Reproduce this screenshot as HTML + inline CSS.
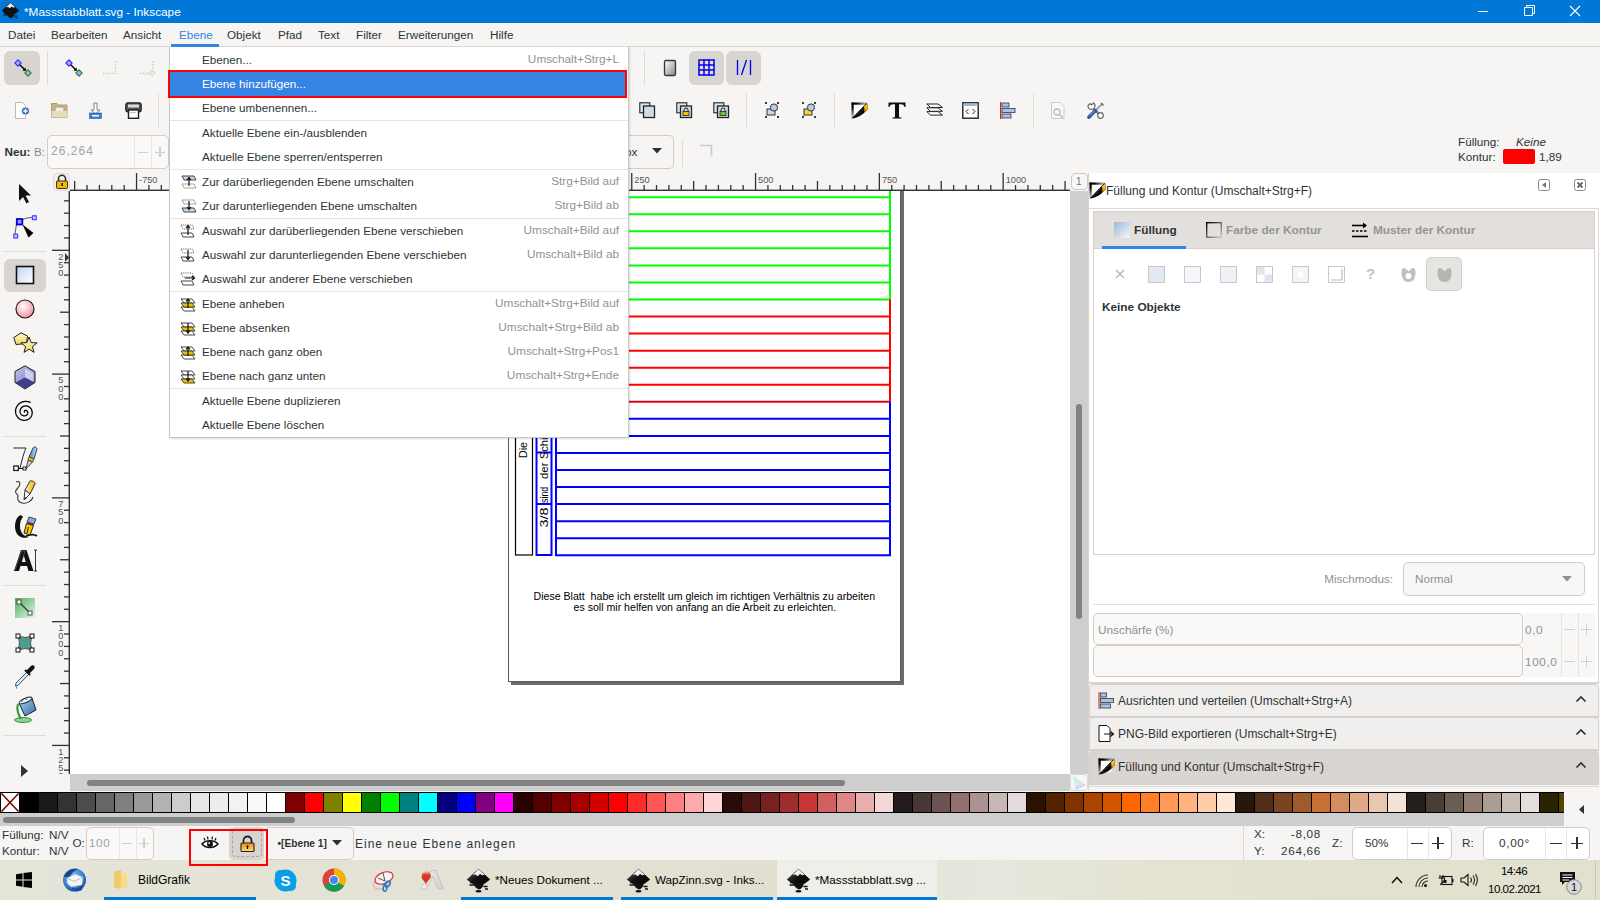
<!DOCTYPE html><html><head><meta charset="utf-8"><style>*{margin:0;padding:0;box-sizing:border-box}
html,body{width:1600px;height:900px;overflow:hidden;background:#f6f5f4;font-family:"Liberation Sans",sans-serif;font-size:12px;color:#2e3436}
.a{position:absolute}
.t{position:absolute;white-space:nowrap;line-height:1}
svg{position:absolute;overflow:visible}
</style></head><body>
<div class="a" style="left:0px;top:0px;width:1600px;height:23px;background:#0078d7"></div>
<div class="t" style="left:24px;top:7px;color:#fff;font-size:11.8px">*Massstabblatt.svg - Inkscape</div>
<svg class="a" style="left:1px;top:2px" width="19" height="19" viewBox="0 0 25 25"><path d='M12.5 0.8 L24.2 11.5 L19 15.5 L12.5 17.5 L6 15.5 L0.8 11.5 Z' fill='#111'/><path d='M12.5 1.2 L18.5 6.8 L16 7.2 L14 5.8 L11.8 8.2 L9.5 6.5 L6.8 7 Z' fill='#f4f4f4'/><path d='M7 15 C8 18 10 20.5 13 21.5 C15.5 21 17 19 18 15.5 Z' fill='#111'/><path d='M4 14.5 H9 M3.5 17 H8' stroke='#111' stroke-width='1.6'/><path d='M17.5 18.5 H21.5 M19 21 H22' stroke='#111' stroke-width='1.4'/></svg>
<svg class="a" style="left:1470px;top:0" width="130" height="23"><path d="M8 11.5 H18" stroke="#fff" stroke-width="1"/><path d="M54.5 7.5 H62.5 V15.5 H54.5 Z M56.5 7.5 V5.5 H64.5 V13.5 H62.5" fill="none" stroke="#fff" stroke-width="1"/><path d="M100 6 L110 16 M110 6 L100 16" stroke="#fff" stroke-width="1.1"/></svg>
<div class="a" style="left:0px;top:46px;width:1600px;height:1px;background:#dcd8d4"></div>
<div class="t" style="left:8px;top:29px;color:#2e3436;font-size:11.7px">Datei</div>
<div class="t" style="left:51px;top:29px;color:#2e3436;font-size:11.7px">Bearbeiten</div>
<div class="t" style="left:123px;top:29px;color:#2e3436;font-size:11.7px">Ansicht</div>
<div class="t" style="left:179px;top:29px;color:#3584e4;font-size:11.7px">Ebene</div>
<div class="t" style="left:227px;top:29px;color:#2e3436;font-size:11.7px">Objekt</div>
<div class="t" style="left:278px;top:29px;color:#2e3436;font-size:11.7px">Pfad</div>
<div class="t" style="left:318px;top:29px;color:#2e3436;font-size:11.7px">Text</div>
<div class="t" style="left:356px;top:29px;color:#2e3436;font-size:11.7px">Filter</div>
<div class="t" style="left:398px;top:29px;color:#2e3436;font-size:11.7px">Erweiterungen</div>
<div class="t" style="left:490px;top:29px;color:#2e3436;font-size:11.7px">Hilfe</div>
<div class="a" style="left:171px;top:44px;width:48px;height:3px;background:#3584e4"></div>
<div class="a" style="left:70px;top:191px;width:1000px;height:583px;background:#fff"></div>
<div class="a" style="left:508px;top:191px;width:393px;height:491px;border:1px solid #5a5a5a;border-top:none"></div>
<div class="a" style="left:901px;top:191px;width:3px;height:494px;background:#6b6b6b"></div>
<div class="a" style="left:511px;top:682px;width:393px;height:3px;background:#6b6b6b"></div>
<svg class="a" style="left:0;top:0" width="1600" height="900"><defs><clipPath id="cv"><rect x="70" y="191" width="1000" height="583"/></clipPath></defs><g clip-path="url(#cv)"><line x1="555" y1="197.2" x2="891" y2="197.2" stroke="#00ff00" stroke-width="2"/><line x1="555" y1="214.25" x2="891" y2="214.25" stroke="#00ff00" stroke-width="2"/><line x1="555" y1="231.3" x2="891" y2="231.3" stroke="#00ff00" stroke-width="2"/><line x1="555" y1="248.35" x2="891" y2="248.35" stroke="#00ff00" stroke-width="2"/><line x1="555" y1="265.4" x2="891" y2="265.4" stroke="#00ff00" stroke-width="2"/><line x1="555" y1="282.45" x2="891" y2="282.45" stroke="#00ff00" stroke-width="2"/><line x1="555" y1="299.5" x2="891" y2="299.5" stroke="#00ff00" stroke-width="2"/><line x1="555" y1="316.55" x2="891" y2="316.55" stroke="#ff0000" stroke-width="2"/><line x1="555" y1="333.6" x2="891" y2="333.6" stroke="#ff0000" stroke-width="2"/><line x1="555" y1="350.65" x2="891" y2="350.65" stroke="#ff0000" stroke-width="2"/><line x1="555" y1="367.7" x2="891" y2="367.7" stroke="#ff0000" stroke-width="2"/><line x1="555" y1="384.75" x2="891" y2="384.75" stroke="#ff0000" stroke-width="2"/><line x1="555" y1="401.8" x2="891" y2="401.8" stroke="#e0001b" stroke-width="2"/><line x1="555" y1="418.85" x2="891" y2="418.85" stroke="#0000ff" stroke-width="2"/><line x1="555" y1="435.9" x2="891" y2="435.9" stroke="#0000ff" stroke-width="2"/><line x1="555" y1="452.95" x2="891" y2="452.95" stroke="#0000ff" stroke-width="2"/><line x1="555" y1="470.0" x2="891" y2="470.0" stroke="#0000ff" stroke-width="2"/><line x1="555" y1="487.05" x2="891" y2="487.05" stroke="#0000ff" stroke-width="2"/><line x1="555" y1="504.1" x2="891" y2="504.1" stroke="#0000ff" stroke-width="2"/><line x1="555" y1="521.15" x2="891" y2="521.15" stroke="#0000ff" stroke-width="2"/><line x1="555" y1="538.2" x2="891" y2="538.2" stroke="#0000ff" stroke-width="2"/><line x1="555" y1="555.25" x2="891" y2="555.25" stroke="#0000ff" stroke-width="2"/><line x1="890" y1="191" x2="890" y2="299.3" stroke="#00ff00" stroke-width="2"/><line x1="890" y1="299.3" x2="890" y2="401.7" stroke="#ff0000" stroke-width="2"/><line x1="890" y1="401.7" x2="890" y2="556" stroke="#0000ff" stroke-width="2"/><line x1="556" y1="191" x2="556" y2="556" stroke="#0000ff" stroke-width="2"/><rect x="536.5" y="150" width="15" height="405" fill="none" stroke="#0000ff" stroke-width="2"/><line x1="536" y1="452.5" x2="552" y2="452.5" stroke="#0000ff" stroke-width="2"/><line x1="536" y1="504" x2="552" y2="504" stroke="#0000ff" stroke-width="2"/><rect x="515.5" y="150" width="17" height="405" fill="none" stroke="#000" stroke-width="1.2"/><text transform="translate(527.2,458) rotate(-90)" font-family="Liberation Sans" font-size="11.5" fill="#000" textLength="16" lengthAdjust="spacingAndGlyphs">Die</text><text transform="translate(527.2,437) rotate(-90)" font-family="Liberation Sans" font-size="11.5" fill="#000">Schienen</text><text transform="translate(548.2,527.5) rotate(-90)" font-family="Liberation Sans" font-size="11" fill="#000" textLength="20" lengthAdjust="spacingAndGlyphs">3/8</text><text transform="translate(548.2,503) rotate(-90)" font-family="Liberation Sans" font-size="11" fill="#000" textLength="16.3" lengthAdjust="spacingAndGlyphs">sind</text><text transform="translate(548.2,479) rotate(-90)" font-family="Liberation Sans" font-size="11" fill="#000" textLength="16.5" lengthAdjust="spacingAndGlyphs">der</text><text transform="translate(548.2,459) rotate(-90)" font-family="Liberation Sans" font-size="11" fill="#000">Schienen</text></g></svg>
<div class="t" style="left:533.5px;top:591px;font-size:10.6px;color:#000">Diese Blatt&nbsp; habe ich erstellt um gleich im richtigen Verhältnis zu arbeiten</div>
<div class="t" style="left:573.5px;top:602.2px;font-size:10.6px;color:#000">es soll mir helfen von anfang an die Arbeit zu erleichten.</div>
<div class="a" style="left:1070px;top:191px;width:18px;height:583px;background:#cecece"></div>
<div class="a" style="left:1076px;top:404px;width:6px;height:215px;border-radius:3px;background:#7e8283"></div>
<div class="a" style="left:70px;top:774px;width:1000px;height:17px;background:#cecece"></div>
<div class="a" style="left:87px;top:780px;width:758px;height:6px;border-radius:3px;background:#7e8283"></div>
<div class="a" style="left:1070px;top:774px;width:18px;height:17px;background:#f8f7f6;border:1px solid #ddd6d0;border-radius:4px"></div>
<div class="a" style="left:0px;top:792px;width:1564px;height:21px;background:#000"></div>
<svg class="a" style="left:0;top:0" width="1600" height="900"><rect x="1" y="793" width="18" height="19" fill="#fff"/><path d="M1.5 793.5 L18.5 811.5 M18.5 793.5 L1.5 811.5" stroke="#800000" stroke-width="1.6"/><rect x="20" y="793" width="18" height="19" fill="#000000"/><rect x="39" y="793" width="18" height="19" fill="#1a1a1a"/><rect x="58" y="793" width="18" height="19" fill="#333333"/><rect x="77" y="793" width="18" height="19" fill="#4d4d4d"/><rect x="96" y="793" width="18" height="19" fill="#666666"/><rect x="115" y="793" width="18" height="19" fill="#808080"/><rect x="134" y="793" width="18" height="19" fill="#999999"/><rect x="153" y="793" width="18" height="19" fill="#b3b3b3"/><rect x="172" y="793" width="18" height="19" fill="#cccccc"/><rect x="191" y="793" width="18" height="19" fill="#e6e6e6"/><rect x="210" y="793" width="18" height="19" fill="#ececec"/><rect x="229" y="793" width="18" height="19" fill="#f2f2f2"/><rect x="248" y="793" width="18" height="19" fill="#f9f9f9"/><rect x="267" y="793" width="18" height="19" fill="#ffffff"/><rect x="286" y="793" width="18" height="19" fill="#800000"/><rect x="305" y="793" width="18" height="19" fill="#ff0000"/><rect x="324" y="793" width="18" height="19" fill="#808000"/><rect x="343" y="793" width="18" height="19" fill="#ffff00"/><rect x="362" y="793" width="18" height="19" fill="#008000"/><rect x="381" y="793" width="18" height="19" fill="#00ff00"/><rect x="400" y="793" width="18" height="19" fill="#008080"/><rect x="419" y="793" width="18" height="19" fill="#00ffff"/><rect x="438" y="793" width="18" height="19" fill="#000080"/><rect x="457" y="793" width="18" height="19" fill="#0000ff"/><rect x="476" y="793" width="18" height="19" fill="#800080"/><rect x="495" y="793" width="18" height="19" fill="#ff00ff"/><rect x="514" y="793" width="18" height="19" fill="#2b0000"/><rect x="533" y="793" width="18" height="19" fill="#550000"/><rect x="552" y="793" width="18" height="19" fill="#800000"/><rect x="571" y="793" width="18" height="19" fill="#aa0000"/><rect x="590" y="793" width="18" height="19" fill="#d40000"/><rect x="609" y="793" width="18" height="19" fill="#ff0000"/><rect x="628" y="793" width="18" height="19" fill="#ff2a2a"/><rect x="647" y="793" width="18" height="19" fill="#ff5555"/><rect x="666" y="793" width="18" height="19" fill="#ff8080"/><rect x="685" y="793" width="18" height="19" fill="#ffaaaa"/><rect x="704" y="793" width="18" height="19" fill="#ffd5d5"/><rect x="723" y="793" width="18" height="19" fill="#280b0b"/><rect x="742" y="793" width="18" height="19" fill="#501616"/><rect x="761" y="793" width="18" height="19" fill="#782121"/><rect x="780" y="793" width="18" height="19" fill="#a02c2c"/><rect x="799" y="793" width="18" height="19" fill="#c83737"/><rect x="818" y="793" width="18" height="19" fill="#d35f5f"/><rect x="837" y="793" width="18" height="19" fill="#de8787"/><rect x="856" y="793" width="18" height="19" fill="#e9afaf"/><rect x="875" y="793" width="18" height="19" fill="#f4d7d7"/><rect x="894" y="793" width="18" height="19" fill="#241c1c"/><rect x="913" y="793" width="18" height="19" fill="#483737"/><rect x="932" y="793" width="18" height="19" fill="#6c5353"/><rect x="951" y="793" width="18" height="19" fill="#916f6f"/><rect x="970" y="793" width="18" height="19" fill="#ac9393"/><rect x="989" y="793" width="18" height="19" fill="#c8b7b7"/><rect x="1008" y="793" width="18" height="19" fill="#e3dbdb"/><rect x="1027" y="793" width="18" height="19" fill="#2b1100"/><rect x="1046" y="793" width="18" height="19" fill="#552200"/><rect x="1065" y="793" width="18" height="19" fill="#803300"/><rect x="1084" y="793" width="18" height="19" fill="#aa4400"/><rect x="1103" y="793" width="18" height="19" fill="#d45500"/><rect x="1122" y="793" width="18" height="19" fill="#ff6600"/><rect x="1141" y="793" width="18" height="19" fill="#ff7f2a"/><rect x="1160" y="793" width="18" height="19" fill="#ff9955"/><rect x="1179" y="793" width="18" height="19" fill="#ffb380"/><rect x="1198" y="793" width="18" height="19" fill="#ffccaa"/><rect x="1217" y="793" width="18" height="19" fill="#ffe6d5"/><rect x="1236" y="793" width="18" height="19" fill="#28170b"/><rect x="1255" y="793" width="18" height="19" fill="#502d16"/><rect x="1274" y="793" width="18" height="19" fill="#784421"/><rect x="1293" y="793" width="18" height="19" fill="#a05a2c"/><rect x="1312" y="793" width="18" height="19" fill="#c87137"/><rect x="1331" y="793" width="18" height="19" fill="#d38d5f"/><rect x="1350" y="793" width="18" height="19" fill="#deaa87"/><rect x="1369" y="793" width="18" height="19" fill="#e9c6af"/><rect x="1388" y="793" width="18" height="19" fill="#f4e3d7"/><rect x="1407" y="793" width="18" height="19" fill="#241f1c"/><rect x="1426" y="793" width="18" height="19" fill="#483e37"/><rect x="1445" y="793" width="18" height="19" fill="#6c5d53"/><rect x="1464" y="793" width="18" height="19" fill="#917c6f"/><rect x="1483" y="793" width="18" height="19" fill="#ac9d93"/><rect x="1502" y="793" width="18" height="19" fill="#c8beb7"/><rect x="1521" y="793" width="18" height="19" fill="#e3dedb"/><rect x="1540" y="793" width="18" height="19" fill="#2b2200"/><rect x="1559" y="793" width="5" height="19" fill="#554400"/></svg>
<div class="a" style="left:0px;top:813px;width:1564px;height:13px;background:#cecece"></div>
<div class="a" style="left:3px;top:817px;width:292px;height:6px;border-radius:3px;background:#7e8283"></div>
<div class="a" style="left:0px;top:860px;width:1600px;height:40px;background:#e4e3d8"></div>
<div class="a" style="left:4px;top:51px;width:36px;height:34px;background:#d8d4d0;border-radius:6px"></div>
<svg class="a" style="left:14px;top:59px" width="18" height="18" viewBox="0 0 18 18"><path d="M4.5 4.5 L11 11" stroke="#000" stroke-width="1.4"/><path d="M8.5 11.5 L12 12 L11.5 8.5 Z" fill="#000"/><rect x="1.8" y="1.8" width="4.4" height="4.4" transform="rotate(45 4 4)" fill="#aaaaff" stroke="#3333ff" stroke-width="1.2"/><rect x="11.8" y="11.8" width="4.4" height="4.4" transform="rotate(45 14 14)" fill="#aaaaff" stroke="#2a8a2a" stroke-width="1.2"/></svg>
<div class="a" style="left:47px;top:51px;width:1px;height:34px;background:#dfdbd7"></div>
<svg class="a" style="left:65px;top:59px" width="18" height="18" viewBox="0 0 18 18"><path d="M4.5 4.5 L11 11" stroke="#000" stroke-width="1.4"/><path d="M8.5 11.5 L12 12 L11.5 8.5 Z" fill="#000"/><rect x="1.8" y="1.8" width="4.4" height="4.4" transform="rotate(45 4 4)" fill="#aaaaff" stroke="#3333ff" stroke-width="1.2"/><rect x="11.8" y="11.8" width="4.4" height="4.4" transform="rotate(45 14 14)" fill="#aaaaff" stroke="#2a8a2a" stroke-width="1.2"/></svg>
<svg class="a" style="left:102px;top:60px" width="16" height="16" viewBox="0 0 16 16"><path d="M13.5 1 V13.5 H1" fill="none" stroke="#b8dcb0" stroke-width="1.3" stroke-dasharray="1.5 1.5"/></svg>
<svg class="a" style="left:139px;top:60px" width="16" height="16" viewBox="0 0 16 16"><path d="M14 1 V11 M1 13.5 H11" fill="none" stroke="#c8c8c8" stroke-width="1.3" stroke-dasharray="1.5 1.5"/><rect x="11" y="11" width="4" height="4" transform="rotate(45 13 13)" fill="#e8f0e8" stroke="#c8dcc8"/></svg>
<div class="a" style="left:644px;top:51px;width:1px;height:34px;background:#dfdbd7"></div>
<svg class="a" style="left:663px;top:59px" width="14" height="18" viewBox="0 0 14 18"><defs><linearGradient id="pg" x1="0" y1="0" x2="1" y2="1"><stop offset="0" stop-color="#fff"/><stop offset="1" stop-color="#888"/></linearGradient></defs><rect x="1.5" y="1.5" width="11" height="15" rx="1.5" fill="url(#pg)" stroke="#333" stroke-width="1.3"/></svg>
<div class="a" style="left:689px;top:51px;width:35px;height:34px;background:#d8d4d0;border-radius:6px"></div>
<svg class="a" style="left:698px;top:59px" width="17" height="17" viewBox="0 0 17 17"><rect x="0" y="0" width="17" height="17" fill="#e6dfc0"/><path d="M1.0 0.5 V16.5 M0.5 1.0 H16.5" stroke="#0000ff" stroke-width="1.5"/><path d="M6.0 0.5 V16.5 M0.5 6.0 H16.5" stroke="#0000ff" stroke-width="1.5"/><path d="M11.0 0.5 V16.5 M0.5 11.0 H16.5" stroke="#0000ff" stroke-width="1.5"/><path d="M16.0 0.5 V16.5 M0.5 16.0 H16.5" stroke="#0000ff" stroke-width="1.5"/></svg>
<div class="a" style="left:726px;top:51px;width:35px;height:34px;background:#d8d4d0;border-radius:6px"></div>
<svg class="a" style="left:736px;top:59px" width="16" height="17" viewBox="0 0 16 17"><path d="M1.5 1 V16 M14.5 1 V16 M5.5 16 L10.5 1" stroke="#0000ff" stroke-width="1.3"/></svg>
<svg class="a" style="left:14px;top:102px" width="16" height="17" viewBox="0 0 16 17"><path d="M1.5 0.5 H8.5 L11.5 3.5 V16.5 H1.5 Z" fill="#fff" stroke="#bbb"/><circle cx="11.5" cy="9" r="4" fill="#2c63b5" stroke="#fff" stroke-width=".8"/><path d="M9.3 9 H13.7 M11.5 6.8 V11.2" stroke="#fff" stroke-width="1.4"/></svg>
<svg class="a" style="left:51px;top:102px" width="17" height="16" viewBox="0 0 17 16"><path d="M0.5 1.5 H6 L7.5 3 H16 V15.5 H0.5 Z" fill="#c8b48e" stroke="#b09a70"/><rect x="4" y="5" width="9" height="5" rx="1" fill="#f4f0e8" stroke="#a08a60" stroke-width=".8"/><path d="M0.5 9 H16 V15.5 H0.5 Z" fill="#e8dcc0"/></svg>
<svg class="a" style="left:89px;top:102px" width="13" height="17" viewBox="0 0 13 17"><path d="M5 1 H8 V8 H11 L6.5 12 L2 8 H5 Z" fill="#fff" stroke="#777" stroke-width=".9"/><rect x="0.5" y="11" width="12" height="5.5" fill="#3c7ad0" stroke="#2a5aa0" stroke-width=".6"/><rect x="3" y="13" width="7" height="1.5" fill="#fff"/></svg>
<svg class="a" style="left:125px;top:102px" width="17" height="17" viewBox="0 0 17 17"><rect x="0.8" y="0.8" width="15.4" height="9" rx="2" fill="#555" stroke="#222" stroke-width="1.2"/><rect x="3" y="2.5" width="11" height="3" fill="#ddd"/><rect x="3.5" y="8" width="10" height="8.3" fill="#fff" stroke="#222" stroke-width="1.4"/><path d="M5 10.5 H11" stroke="#9c9" stroke-width=".8"/></svg>
<div class="a" style="left:158px;top:93px;width:1px;height:34px;background:#dfdbd7"></div>
<svg class="a" style="left:639px;top:102px" width="17" height="17" viewBox="0 0 17 17"><rect x="0.8" y="0.8" width="10" height="10" fill="#dde6ee" stroke="#222" stroke-width="1.1"/><rect x="4.5" y="4" width="11" height="11.5" fill="#cfdcea" stroke="#222" stroke-width="1.3"/></svg>
<svg class="a" style="left:676px;top:102px" width="17" height="17" viewBox="0 0 17 17"><rect x="0.8" y="0.8" width="10" height="10" fill="#dde6ee" stroke="#222" stroke-width="1.1"/><rect x="4.5" y="4" width="11" height="11.5" fill="#cfdcea" stroke="#222" stroke-width="1.3"/><path d="M8 9.5 V8 A2 2 0 0 1 12 8 V9.5" fill="none" stroke="#222" stroke-width="1"/><rect x="7" y="9.5" width="6" height="4" fill="#f5c000" stroke="#222" stroke-width=".8"/></svg>
<svg class="a" style="left:713px;top:102px" width="17" height="17" viewBox="0 0 17 17"><rect x="0.8" y="0.8" width="10" height="10" fill="#dde6ee" stroke="#222" stroke-width="1.1"/><rect x="4.5" y="4" width="11" height="11.5" fill="#cfdcea" stroke="#222" stroke-width="1.3"/><path d="M8 9.5 V8 A2 2 0 0 1 12 8 V9.5" fill="none" stroke="#222" stroke-width="1"/><rect x="7" y="9.5" width="6" height="4" fill="#7cc040" stroke="#222" stroke-width=".8"/></svg>
<div class="a" style="left:746px;top:93px;width:1px;height:34px;background:#dfdbd7"></div>
<svg class="a" style="left:764px;top:102px" width="17" height="17" viewBox="0 0 17 17"><path d="M1 1 h2 M13 1 h2 M1 15 h2 M13 15 h2" stroke="#000" stroke-width="1.5"/><rect x="3" y="7" width="8" height="6" fill="#c9d8e8" stroke="#333"/><circle cx="10" cy="5.5" r="3.6" fill="#b8cde0" stroke="#333"/></svg>
<svg class="a" style="left:801px;top:102px" width="17" height="17" viewBox="0 0 17 17"><path d="M1 1 h2 M13 1 h2 M1 15 h2 M13 15 h2" stroke="#000" stroke-width="1.5"/><rect x="3" y="7" width="8" height="6" fill="#f5d040" stroke="#333"/><circle cx="10" cy="5.5" r="3.6" fill="#b8cde0" stroke="#333"/></svg>
<div class="a" style="left:834px;top:93px;width:1px;height:34px;background:#dfdbd7"></div>
<svg class="a" style="left:851px;top:102px" width="17" height="17" viewBox="0 0 17 17"><defs><linearGradient id="fsg" x1="0" y1="0" x2="1" y2="0"><stop offset=".3" stop-color="#000"/><stop offset="1" stop-color="#000" stop-opacity=".15"/></linearGradient><linearGradient id="fsgv" x1="0" y1="0" x2="0" y2="1"><stop offset=".3" stop-color="#000"/><stop offset="1" stop-color="#000" stop-opacity=".15"/></linearGradient><linearGradient id="fsgy" x1="0" y1="0" x2="0" y2="1"><stop offset="0" stop-color="#ffe820"/><stop offset="1" stop-color="#f08000"/></linearGradient></defs><path d="M1 1 H16 L13 14 L1 16 Z" fill="#fff"/><rect x="0.5" y="0.5" width="16" height="2.2" fill="url(#fsg)"/><rect x="0.5" y="0.5" width="2.2" height="16" fill="url(#fsgv)"/><path d="M0.5 16.5 L15.5 1 L16.5 2.5 V7.5 L12.5 11.5 C9.5 14.2 5.5 16 0.5 16.5 Z" fill="#0a0a0a"/><path d="M5 13.5 L13 5.5" stroke="#777" stroke-width=".7" stroke-dasharray="1 1"/><path d="M13 4.2 L16.5 1.5 V7.5 L13.6 10.2 Z" fill="url(#fsgy)"/></svg>
<svg class="a" style="left:888px;top:102px" width="18" height="17" viewBox="0 0 18 17"><path d="M0.5 0.5 H17.5 V5 H16.5 C16 3 15 2.3 12.5 2.3 H11 V14.5 C11 15.3 11.5 15.6 13.5 15.6 V16.5 H4.5 V15.6 C6.5 15.6 7 15.3 7 14.5 V2.3 H5.5 C3 2.3 2 3 1.5 5 H0.5 Z" fill="#0d0d0d"/></svg>
<svg class="a" style="left:926px;top:103px" width="17" height="15" viewBox="0 0 17 15"><path d="M0.8 8.6 H12 L16.5 12.1 H4.5 Z" fill="#fff" stroke="#222" stroke-width="1"/><path d="M0.8 4.8 H12 L16.5 8.3 H4.5 Z" fill="#fff" stroke="#222" stroke-width="1"/><path d="M0.8 1.0 H12 L16.5 4.5 H4.5 Z" fill="#fff" stroke="#222" stroke-width="1"/></svg>
<svg class="a" style="left:962px;top:102px" width="17" height="17" viewBox="0 0 17 17"><rect x="0.8" y="0.8" width="15.4" height="15.4" fill="#fff" stroke="#222" stroke-width="1.4"/><rect x="1.5" y="1.5" width="14" height="2.5" fill="#9ab8dc"/><path d="M6.5 7 L4 9.5 L6.5 12 M10.5 7 L13 9.5 L10.5 12" fill="none" stroke="#222" stroke-width="1"/></svg>
<svg class="a" style="left:999px;top:102px" width="17" height="17" viewBox="0 0 17 17"><rect x="1" y="0" width="1.2" height="17" fill="#d02020"/><rect x="3" y="1" width="7" height="4" fill="#a8c4e4" stroke="#335" stroke-width=".8"/><rect x="3" y="6.5" width="13" height="4" fill="#a8c4e4" stroke="#335" stroke-width=".8"/><rect x="3" y="12" width="9" height="4" fill="#a8c4e4" stroke="#335" stroke-width=".8"/></svg>
<div class="a" style="left:1033px;top:93px;width:1px;height:34px;background:#dfdbd7"></div>
<svg class="a" style="left:1050px;top:102px" width="16" height="17" viewBox="0 0 16 17"><path d="M1.5 0.5 H10 L14 4.5 V16.5 H1.5 Z" fill="#f8f8f8" stroke="#ccc"/><circle cx="7" cy="10" r="3" fill="none" stroke="#bbb" stroke-width="1.3"/><path d="M9 12 L13 16" stroke="#bbb" stroke-width="1.5"/></svg>
<svg class="a" style="left:1087px;top:102px" width="17" height="17" viewBox="0 0 17 17"><path d="M4.5 4.5 L13 13" stroke="#777" stroke-width="2.4"/><path d="M1 3.5 A3.5 3.5 0 1 0 6.5 1 L4.5 3 L3 1.5 Z" fill="#fff" stroke="#666" stroke-width="1.1"/><circle cx="13.5" cy="13.5" r="2.8" fill="#fff" stroke="#666" stroke-width="1.2"/><path d="M9 8 L15.5 1.5" stroke="#888" stroke-width="1.5"/><path d="M14 1 L16.5 3.5" stroke="#666" stroke-width="1.4"/><path d="M1.8 15.2 L8.5 8.5" stroke="#2c5aa8" stroke-width="3.4" stroke-linecap="round"/><path d="M3 13.5 L7.5 9" stroke="#7aa8e0" stroke-width="1"/></svg>
<div class="t" style="left:4.5px;top:145.8px;font-weight:bold;font-size:11.7px;color:#2e3436">Neu:</div>
<div class="t" style="left:34px;top:145.8px;font-size:11.7px;color:#8b8e8f">B:</div>
<div class="a" style="left:47px;top:135px;width:122px;height:34px;background:#faf9f8;border:1px solid #d3ccc6;border-radius:5px"></div>
<div class="a" style="left:134px;top:136px;width:1px;height:32px;background:#e9e5e1"></div>
<div class="a" style="left:151px;top:136px;width:1px;height:32px;background:#e9e5e1"></div>
<div class="t" style="left:51px;top:145.8px;font-size:11.9px;color:#a0a3a4;letter-spacing:1.1px">26,264</div>
<div class="a" style="left:138px;top:151.5px;width:10px;height:1.3px;background:#d0d0d0"></div>
<div class="a" style="left:155px;top:151.5px;width:10px;height:1.3px;background:#d0d0d0"></div>
<div class="a" style="left:159.4px;top:147px;width:1.3px;height:10px;background:#d0d0d0"></div>
<div class="a" style="left:600px;top:135px;width:74px;height:34px;background:#f6f5f4;border:1px solid #d3ccc6;border-radius:5px;border-left:none;border-top-left-radius:0;border-bottom-left-radius:0"></div>
<div class="t" style="left:625px;top:145.8px;font-size:11.7px;color:#2e3436">ox</div>
<svg class="a" style="left:651px;top:147px" width="12" height="8" viewBox="0 0 12 8"><path d="M1 1 H11 L6 6.5 Z" fill="#2e3436"/></svg>
<div class="a" style="left:682px;top:140px;width:1px;height:27px;background:#dfdbd7"></div>
<svg class="a" style="left:699px;top:144px" width="16" height="14" viewBox="0 0 16 14"><path d="M1 1.5 H12.5 V13" fill="none" stroke="#c8c8c8" stroke-width="1.6"/><path d="M1 1.5 H4" stroke="#f0d0d0" stroke-width="1.6"/><path d="M12.5 10 V13" stroke="#f0d0d0" stroke-width="1.6"/></svg>
<div class="t" style="left:1458px;top:136px;font-size:11.7px">Füllung:</div>
<div class="t" style="left:1516px;top:136px;font-size:11.7px;font-style:italic">Keine</div>
<div class="t" style="left:1458px;top:150.8px;font-size:11.7px">Kontur:</div>
<div class="a" style="left:1503px;top:149px;width:32px;height:15px;background:#ff0000;border-radius:2px"></div>
<div class="t" style="left:1539px;top:150.8px;font-size:11.7px">1,89</div>
<svg class="a" style="left:0;top:0" width="1600" height="900"><defs><clipPath id="rv"><rect x="50" y="191" width="20" height="583"/></clipPath></defs><rect x="70" y="189.6" width="1000" height="1.4" fill="#2e3436"/><rect x="74.00" y="181" width="1.3" height="9" fill="#2e3436"/><rect x="86.38" y="185" width="1.3" height="5" fill="#2e3436"/><rect x="98.76" y="185" width="1.3" height="5" fill="#2e3436"/><rect x="111.14" y="185" width="1.3" height="5" fill="#2e3436"/><rect x="123.52" y="185" width="1.3" height="5" fill="#2e3436"/><rect x="135.90" y="173" width="1.3" height="17" fill="#2e3436"/><text x="139.10" y="183.2" font-family="Liberation Sans" font-size="9.2" fill="#50575a">-750</text><rect x="148.28" y="185" width="1.3" height="5" fill="#2e3436"/><rect x="160.66" y="185" width="1.3" height="5" fill="#2e3436"/><rect x="173.04" y="185" width="1.3" height="5" fill="#2e3436"/><rect x="185.42" y="185" width="1.3" height="5" fill="#2e3436"/><rect x="197.80" y="181" width="1.3" height="9" fill="#2e3436"/><rect x="210.18" y="185" width="1.3" height="5" fill="#2e3436"/><rect x="222.56" y="185" width="1.3" height="5" fill="#2e3436"/><rect x="234.94" y="185" width="1.3" height="5" fill="#2e3436"/><rect x="247.32" y="185" width="1.3" height="5" fill="#2e3436"/><rect x="259.70" y="173" width="1.3" height="17" fill="#2e3436"/><text x="262.90" y="183.2" font-family="Liberation Sans" font-size="9.2" fill="#50575a">-500</text><rect x="272.08" y="185" width="1.3" height="5" fill="#2e3436"/><rect x="284.46" y="185" width="1.3" height="5" fill="#2e3436"/><rect x="296.84" y="185" width="1.3" height="5" fill="#2e3436"/><rect x="309.22" y="185" width="1.3" height="5" fill="#2e3436"/><rect x="321.60" y="181" width="1.3" height="9" fill="#2e3436"/><rect x="333.98" y="185" width="1.3" height="5" fill="#2e3436"/><rect x="346.36" y="185" width="1.3" height="5" fill="#2e3436"/><rect x="358.74" y="185" width="1.3" height="5" fill="#2e3436"/><rect x="371.12" y="185" width="1.3" height="5" fill="#2e3436"/><rect x="383.50" y="173" width="1.3" height="17" fill="#2e3436"/><text x="386.70" y="183.2" font-family="Liberation Sans" font-size="9.2" fill="#50575a">-250</text><rect x="395.88" y="185" width="1.3" height="5" fill="#2e3436"/><rect x="408.26" y="185" width="1.3" height="5" fill="#2e3436"/><rect x="420.64" y="185" width="1.3" height="5" fill="#2e3436"/><rect x="433.02" y="185" width="1.3" height="5" fill="#2e3436"/><rect x="445.40" y="181" width="1.3" height="9" fill="#2e3436"/><rect x="457.78" y="185" width="1.3" height="5" fill="#2e3436"/><rect x="470.16" y="185" width="1.3" height="5" fill="#2e3436"/><rect x="482.54" y="185" width="1.3" height="5" fill="#2e3436"/><rect x="494.92" y="185" width="1.3" height="5" fill="#2e3436"/><rect x="507.30" y="173" width="1.3" height="17" fill="#2e3436"/><text x="510.50" y="183.2" font-family="Liberation Sans" font-size="9.2" fill="#50575a">0</text><rect x="519.68" y="185" width="1.3" height="5" fill="#2e3436"/><rect x="532.06" y="185" width="1.3" height="5" fill="#2e3436"/><rect x="544.44" y="185" width="1.3" height="5" fill="#2e3436"/><rect x="556.82" y="185" width="1.3" height="5" fill="#2e3436"/><rect x="569.20" y="181" width="1.3" height="9" fill="#2e3436"/><rect x="581.58" y="185" width="1.3" height="5" fill="#2e3436"/><rect x="593.96" y="185" width="1.3" height="5" fill="#2e3436"/><rect x="606.34" y="185" width="1.3" height="5" fill="#2e3436"/><rect x="618.72" y="185" width="1.3" height="5" fill="#2e3436"/><rect x="631.10" y="173" width="1.3" height="17" fill="#2e3436"/><text x="634.30" y="183.2" font-family="Liberation Sans" font-size="9.2" fill="#50575a">250</text><rect x="643.48" y="185" width="1.3" height="5" fill="#2e3436"/><rect x="655.86" y="185" width="1.3" height="5" fill="#2e3436"/><rect x="668.24" y="185" width="1.3" height="5" fill="#2e3436"/><rect x="680.62" y="185" width="1.3" height="5" fill="#2e3436"/><rect x="693.00" y="181" width="1.3" height="9" fill="#2e3436"/><rect x="705.38" y="185" width="1.3" height="5" fill="#2e3436"/><rect x="717.76" y="185" width="1.3" height="5" fill="#2e3436"/><rect x="730.14" y="185" width="1.3" height="5" fill="#2e3436"/><rect x="742.52" y="185" width="1.3" height="5" fill="#2e3436"/><rect x="754.90" y="173" width="1.3" height="17" fill="#2e3436"/><text x="758.10" y="183.2" font-family="Liberation Sans" font-size="9.2" fill="#50575a">500</text><rect x="767.28" y="185" width="1.3" height="5" fill="#2e3436"/><rect x="779.66" y="185" width="1.3" height="5" fill="#2e3436"/><rect x="792.04" y="185" width="1.3" height="5" fill="#2e3436"/><rect x="804.42" y="185" width="1.3" height="5" fill="#2e3436"/><rect x="816.80" y="181" width="1.3" height="9" fill="#2e3436"/><rect x="829.18" y="185" width="1.3" height="5" fill="#2e3436"/><rect x="841.56" y="185" width="1.3" height="5" fill="#2e3436"/><rect x="853.94" y="185" width="1.3" height="5" fill="#2e3436"/><rect x="866.32" y="185" width="1.3" height="5" fill="#2e3436"/><rect x="878.70" y="173" width="1.3" height="17" fill="#2e3436"/><text x="881.90" y="183.2" font-family="Liberation Sans" font-size="9.2" fill="#50575a">750</text><rect x="891.08" y="185" width="1.3" height="5" fill="#2e3436"/><rect x="903.46" y="185" width="1.3" height="5" fill="#2e3436"/><rect x="915.84" y="185" width="1.3" height="5" fill="#2e3436"/><rect x="928.22" y="185" width="1.3" height="5" fill="#2e3436"/><rect x="940.60" y="181" width="1.3" height="9" fill="#2e3436"/><rect x="952.98" y="185" width="1.3" height="5" fill="#2e3436"/><rect x="965.36" y="185" width="1.3" height="5" fill="#2e3436"/><rect x="977.74" y="185" width="1.3" height="5" fill="#2e3436"/><rect x="990.12" y="185" width="1.3" height="5" fill="#2e3436"/><rect x="1002.50" y="173" width="1.3" height="17" fill="#2e3436"/><text x="1005.70" y="183.2" font-family="Liberation Sans" font-size="9.2" fill="#50575a">1000</text><rect x="1014.88" y="185" width="1.3" height="5" fill="#2e3436"/><rect x="1027.26" y="185" width="1.3" height="5" fill="#2e3436"/><rect x="1039.64" y="185" width="1.3" height="5" fill="#2e3436"/><rect x="1052.02" y="185" width="1.3" height="5" fill="#2e3436"/><rect x="1064.40" y="181" width="1.3" height="9" fill="#2e3436"/><g clip-path="url(#rv)"><rect x="68.6" y="191" width="1.4" height="583" fill="#2e3436"/><rect x="64" y="200.16" width="5" height="1.3" fill="#2e3436"/><rect x="64" y="212.54" width="5" height="1.3" fill="#2e3436"/><rect x="64" y="224.92" width="5" height="1.3" fill="#2e3436"/><rect x="64" y="237.30" width="5" height="1.3" fill="#2e3436"/><rect x="52" y="249.67" width="17" height="1.3" fill="#2e3436"/><text x="58.2" y="259.67" font-family="Liberation Sans" font-size="9.2" fill="#50575a">2</text><text x="58.2" y="267.87" font-family="Liberation Sans" font-size="9.2" fill="#50575a">5</text><text x="58.2" y="276.07" font-family="Liberation Sans" font-size="9.2" fill="#50575a">0</text><rect x="64" y="262.05" width="5" height="1.3" fill="#2e3436"/><rect x="64" y="274.43" width="5" height="1.3" fill="#2e3436"/><rect x="64" y="286.81" width="5" height="1.3" fill="#2e3436"/><rect x="64" y="299.18" width="5" height="1.3" fill="#2e3436"/><rect x="60" y="311.56" width="9" height="1.3" fill="#2e3436"/><rect x="64" y="323.94" width="5" height="1.3" fill="#2e3436"/><rect x="64" y="336.32" width="5" height="1.3" fill="#2e3436"/><rect x="64" y="348.69" width="5" height="1.3" fill="#2e3436"/><rect x="64" y="361.07" width="5" height="1.3" fill="#2e3436"/><rect x="52" y="373.45" width="17" height="1.3" fill="#2e3436"/><text x="58.2" y="383.45" font-family="Liberation Sans" font-size="9.2" fill="#50575a">5</text><text x="58.2" y="391.65" font-family="Liberation Sans" font-size="9.2" fill="#50575a">0</text><text x="58.2" y="399.85" font-family="Liberation Sans" font-size="9.2" fill="#50575a">0</text><rect x="64" y="385.83" width="5" height="1.3" fill="#2e3436"/><rect x="64" y="398.20" width="5" height="1.3" fill="#2e3436"/><rect x="64" y="410.58" width="5" height="1.3" fill="#2e3436"/><rect x="64" y="422.96" width="5" height="1.3" fill="#2e3436"/><rect x="60" y="435.34" width="9" height="1.3" fill="#2e3436"/><rect x="64" y="447.71" width="5" height="1.3" fill="#2e3436"/><rect x="64" y="460.09" width="5" height="1.3" fill="#2e3436"/><rect x="64" y="472.47" width="5" height="1.3" fill="#2e3436"/><rect x="64" y="484.85" width="5" height="1.3" fill="#2e3436"/><rect x="52" y="497.22" width="17" height="1.3" fill="#2e3436"/><text x="58.2" y="507.22" font-family="Liberation Sans" font-size="9.2" fill="#50575a">7</text><text x="58.2" y="515.42" font-family="Liberation Sans" font-size="9.2" fill="#50575a">5</text><text x="58.2" y="523.62" font-family="Liberation Sans" font-size="9.2" fill="#50575a">0</text><rect x="64" y="509.60" width="5" height="1.3" fill="#2e3436"/><rect x="64" y="521.98" width="5" height="1.3" fill="#2e3436"/><rect x="64" y="534.36" width="5" height="1.3" fill="#2e3436"/><rect x="64" y="546.74" width="5" height="1.3" fill="#2e3436"/><rect x="60" y="559.11" width="9" height="1.3" fill="#2e3436"/><rect x="64" y="571.49" width="5" height="1.3" fill="#2e3436"/><rect x="64" y="583.87" width="5" height="1.3" fill="#2e3436"/><rect x="64" y="596.25" width="5" height="1.3" fill="#2e3436"/><rect x="64" y="608.62" width="5" height="1.3" fill="#2e3436"/><rect x="52" y="621.00" width="17" height="1.3" fill="#2e3436"/><text x="58.2" y="631.00" font-family="Liberation Sans" font-size="9.2" fill="#50575a">1</text><text x="58.2" y="639.20" font-family="Liberation Sans" font-size="9.2" fill="#50575a">0</text><text x="58.2" y="647.40" font-family="Liberation Sans" font-size="9.2" fill="#50575a">0</text><text x="58.2" y="655.60" font-family="Liberation Sans" font-size="9.2" fill="#50575a">0</text><rect x="64" y="633.38" width="5" height="1.3" fill="#2e3436"/><rect x="64" y="645.75" width="5" height="1.3" fill="#2e3436"/><rect x="64" y="658.13" width="5" height="1.3" fill="#2e3436"/><rect x="64" y="670.51" width="5" height="1.3" fill="#2e3436"/><rect x="60" y="682.89" width="9" height="1.3" fill="#2e3436"/><rect x="64" y="695.26" width="5" height="1.3" fill="#2e3436"/><rect x="64" y="707.64" width="5" height="1.3" fill="#2e3436"/><rect x="64" y="720.02" width="5" height="1.3" fill="#2e3436"/><rect x="64" y="732.40" width="5" height="1.3" fill="#2e3436"/><rect x="52" y="744.77" width="17" height="1.3" fill="#2e3436"/><text x="58.2" y="754.77" font-family="Liberation Sans" font-size="9.2" fill="#50575a">1</text><text x="58.2" y="762.98" font-family="Liberation Sans" font-size="9.2" fill="#50575a">2</text><text x="58.2" y="771.17" font-family="Liberation Sans" font-size="9.2" fill="#50575a">5</text><text x="58.2" y="779.38" font-family="Liberation Sans" font-size="9.2" fill="#50575a">0</text><rect x="64" y="757.15" width="5" height="1.3" fill="#2e3436"/><rect x="64" y="769.53" width="5" height="1.3" fill="#2e3436"/><path d="M65 253 L69 257.5 L65 262 Z" fill="#2e3436"/></g></svg>
<div class="a" style="left:53px;top:173px;width:17px;height:18px;border-radius:4px;background:#f1efed;border:1px solid #e2ddd8"></div>
<svg class="a" style="left:55px;top:174px" width="14" height="16"><path d="M3.5 7 V4.8 A3.5 3.5 0 0 1 10.5 4.8 V7" fill="none" stroke="#2e2e2e" stroke-width="1.6"/><rect x="1.5" y="7" width="11" height="7.5" rx="1" fill="#f5b800" stroke="#3a3020" stroke-width="1"/><rect x="6.3" y="9" width="1.6" height="3" fill="#222"/></svg>
<div class="a" style="left:1071px;top:173px;width:17px;height:17px;border-radius:4px;background:#f8f7f6;border:1px solid #cfc9c4"></div>
<div class="t" style="left:1076px;top:177px;font-size:10px;color:#777">1</div>
<svg class="a" style="left:13.0px;top:180.5px" width="24" height="24" viewBox="0 0 24 24"><path d="M6 3 L6 20 L10 16 L13.5 22.5 L16 21 L12.5 14.5 L18 14.5 Z" fill="#111"/></svg>
<div class="a" style="left:3px;top:251px;width:43px;height:1px;background:#e0dcd8"></div>
<div class="a" style="left:4px;top:259px;width:42px;height:33px;background:#d8d4d0;border-radius:6px"></div>
<svg class="a" style="left:13.0px;top:263.0px" width="24" height="24" viewBox="0 0 24 24"><defs><linearGradient id="rg" x1="0" y1="0" x2="1" y2="1"><stop offset="0" stop-color="#c0d4ec"/><stop offset="1" stop-color="#fff"/></linearGradient></defs><rect x="3.5" y="3.5" width="17" height="17" fill="url(#rg)" stroke="#111" stroke-width="1.6"/></svg>
<svg class="a" style="left:13.0px;top:297.0px" width="24" height="24" viewBox="0 0 24 24"><defs><radialGradient id="cg" cx=".4" cy=".35" r=".7"><stop offset="0" stop-color="#fff"/><stop offset="1" stop-color="#f08c9a"/></radialGradient></defs><circle cx="12" cy="12" r="9" fill="url(#cg)" stroke="#222" stroke-width="1.2"/></svg>
<div class="a" style="left:3px;top:436px;width:43px;height:1px;background:#e0dcd8"></div>
<div class="a" style="left:3px;top:585px;width:43px;height:1px;background:#e0dcd8"></div>
<svg class="a" style="left:13.0px;top:596.0px" width="24" height="24" viewBox="0 0 24 24"><defs><linearGradient id="gg" x1="0" y1="0" x2="1" y2="1"><stop offset="0" stop-color="#4cae5c"/><stop offset="1" stop-color="#e8f5ea"/></linearGradient></defs><rect x="2" y="2" width="20" height="20" fill="url(#gg)"/><path d="M6 6 L17 17" stroke="#333" stroke-width="1.1"/><rect x="4" y="4" width="4" height="4" fill="#fff" stroke="#333" stroke-width=".8"/><rect x="15" y="15" width="4" height="4" fill="#fff" stroke="#333" stroke-width=".8"/></svg>
<svg class="a" style="left:13.0px;top:631.0px" width="24" height="24" viewBox="0 0 24 24"><path d="M5 5 Q12 8 19 5 Q16 12 19 19 Q12 16 5 19 Q8 12 5 5 Z" fill="#4e9c8c" stroke="#333" stroke-width=".8"/><rect x="3" y="3" width="4" height="4" fill="#fff" stroke="#111"/><rect x="17" y="3" width="4" height="4" fill="#fff" stroke="#111"/><rect x="3" y="17" width="4" height="4" fill="#fff" stroke="#111"/><rect x="17" y="17" width="4" height="4" fill="#fff" stroke="#111"/></svg>
<div class="a" style="left:3px;top:735px;width:43px;height:1px;background:#e0dcd8"></div>
<svg class="a" style="left:13.0px;top:759.0px" width="24" height="24" viewBox="0 0 24 24"><path d="M8 6 L15 12 L8 18 Z" fill="#2e3436"/></svg>
<svg class="a" style="left:13px;top:446px" width="25" height="26" viewBox="0 0 25 26"><path d="M0.5 2 H13 C11 6 9 14 7 22" fill="none" stroke="#222" stroke-width="1"/><rect x="0.8" y="20" width="4.5" height="4.5" fill="#fff" stroke="#111" stroke-width="1.2"/><path d="M5.5 22.5 H10" stroke="#111" stroke-width="1"/><rect x="10" y="21" width="3" height="3" fill="#fff" stroke="#111" stroke-width=".9"/><defs><linearGradient id="pb" x1="0" y1="0" x2="1" y2="0"><stop offset="0" stop-color="#4a86c0"/><stop offset="1" stop-color="#b8dcf4"/></linearGradient></defs><path d="M16 11 L20 2 C21 0 24 1 24 3 L21 13 Z" fill="url(#pb)" stroke="#234" stroke-width=".9"/><path d="M16 11 L21 13 L19.5 16 L15 14 Z" fill="#f5c800" stroke="#333" stroke-width=".8"/><path d="M15 14 L19.5 16 L13 23 Z" fill="#ccc" stroke="#222" stroke-width=".8"/></svg>
<svg class="a" style="left:13px;top:480px" width="24" height="25" viewBox="0 0 24 25"><path d="M3 2 C8 0 8 5 4 9 C0 13 5 14 5 16 C4 19 5 22 9 23 C14 24 19 21 20 17" fill="none" stroke="#333" stroke-width="1.1"/><defs><linearGradient id="pc" x1="0" y1="0" x2="1" y2="0"><stop offset="0" stop-color="#fff8c0"/><stop offset="1" stop-color="#f0a800"/></linearGradient></defs><path d="M12 10 L17 1 C18 0 23 2 22 4 L17 14 Z" fill="url(#pc)" stroke="#333" stroke-width="1"/><path d="M12 10 L17 14 L11 20 Z" fill="#fff" stroke="#333" stroke-width="1"/><path d="M12.5 17 L11 20 L14 18 Z" fill="#111"/></svg>
<svg class="a" style="left:13px;top:514px" width="25" height="26" viewBox="0 0 25 26"><path d="M6 2 C2 5 1 13 3 18 C5 23 11 25 16 23 C10 22 7 18 7 12 C7 8 8 5 10 3 C9 1 7 1 6 2 Z" fill="#111"/><path d="M13 22 C17 21 20 19 24 22" fill="none" stroke="#111" stroke-width="1.6"/><path d="M16 3 L23 5 L21 10 L14 8 Z" fill="#7ab0e0" stroke="#223" stroke-width=".8"/><path d="M14 8 L21 10 L20.5 11.5 L13.5 9.5 Z" fill="#d01010"/><path d="M13.5 9.5 L20.5 11.5 L17 21 L11 19 Z" fill="#f5c800" stroke="#222" stroke-width="1"/><path d="M15.5 13 L14 19" stroke="#222" stroke-width="1"/></svg>
<svg class="a" style="left:13px;top:549px" width="25" height="23" viewBox="0 0 25 23"><path d="M1 22 L8 1 H13.5 L20.5 22 H15.5 L14 17 H7.5 L6 22 Z M8.8 13 H12.7 L10.7 6 Z" fill="#111"/><path d="M2 21 L8.5 2 H12 L9 12" fill="none" stroke="#555" stroke-width=".8"/><path d="M22.5 1 V22 M21 1 H24 M21 22 H24" stroke="#222" stroke-width=".9"/></svg>
<svg class="a" style="left:13px;top:664px" width="24" height="26" viewBox="0 0 24 26"><path d="M14 8 L3 19 L2.5 22 L5 21.5 L16 10" fill="#d8e8f4" stroke="#456" stroke-width="1"/><path d="M13 7 L18 2 C20 0 23 3 21 5 L16 10 Z" fill="#111"/><path d="M12 6 L17 11" stroke="#111" stroke-width="2"/><path d="M3 23 C2 24.5 4 25.5 4.3 24 C4.5 23 3.5 22 3 23 Z" fill="#5a8ab0"/></svg>
<svg class="a" style="left:13px;top:697px" width="25" height="27" viewBox="0 0 25 27"><ellipse cx="10" cy="23" rx="8.5" ry="2.5" fill="#8cd48c" stroke="#2a7a2a" stroke-width=".8"/><path d="M5 7 C3 12 6 19 8 22" fill="none" stroke="#3a9a3a" stroke-width="2.2"/><defs><linearGradient id="bk" x1="0" y1="0" x2="1" y2="1"><stop offset="0" stop-color="#a8d0f0"/><stop offset="1" stop-color="#3a6ea8"/></linearGradient></defs><path d="M6 6 L19 1 L23 13 L12 19 Z" fill="url(#bk)" stroke="#123" stroke-width="1"/><ellipse cx="12.5" cy="3.5" rx="6.8" ry="2.2" transform="rotate(-22 12.5 3.5)" fill="#e8f4fc" stroke="#123" stroke-width=".9"/><path d="M9 5 C8 2 12 0 14 3" fill="none" stroke="#333" stroke-width=".8"/></svg>
<svg class="a" style="left:12.5px;top:399.5px" width="24" height="24" viewBox="0 0 24 24"><path d="M12.00 12.00 L12.06 12.00 L12.11 12.02 L12.17 12.04 L12.22 12.07 L12.27 12.11 L12.31 12.16 L12.34 12.21 L12.37 12.28 L12.39 12.34 L12.40 12.41 L12.40 12.49 L12.40 12.57 L12.38 12.65 L12.35 12.73 L12.31 12.81 L12.26 12.88 L12.20 12.96 L12.14 13.03 L12.06 13.09 L11.97 13.15 L11.87 13.20 L11.76 13.24 L11.65 13.28 L11.53 13.30 L11.40 13.31 L11.27 13.31 L11.14 13.29 L11.00 13.26 L10.86 13.22 L10.73 13.17 L10.59 13.10 L10.46 13.01 L10.33 12.91 L10.21 12.80 L10.10 12.68 L10.00 12.54 L9.90 12.38 L9.82 12.22 L9.75 12.05 L9.70 11.87 L9.66 11.67 L9.64 11.48 L9.63 11.27 L9.64 11.06 L9.68 10.85 L9.73 10.64 L9.79 10.43 L9.88 10.22 L9.99 10.02 L10.12 9.82 L10.26 9.63 L10.43 9.45 L10.61 9.28 L10.81 9.13 L11.03 8.99 L11.26 8.86 L11.50 8.75 L11.76 8.67 L12.03 8.60 L12.30 8.56 L12.59 8.54 L12.88 8.54 L13.17 8.56 L13.46 8.62 L13.75 8.69 L14.04 8.79 L14.33 8.92 L14.61 9.08 L14.87 9.25 L15.13 9.45 L15.37 9.68 L15.59 9.93 L15.80 10.20 L15.98 10.49 L16.15 10.79 L16.29 11.12 L16.40 11.46 L16.49 11.81 L16.55 12.17 L16.58 12.54 L16.58 12.91 L16.54 13.29 L16.48 13.67 L16.38 14.05 L16.26 14.42 L16.10 14.78 L15.91 15.14 L15.69 15.48 L15.43 15.81 L15.15 16.11 L14.85 16.40 L14.51 16.67 L14.15 16.90 L13.77 17.12 L13.37 17.30 L12.96 17.45 L12.52 17.56 L12.08 17.64 L11.62 17.69 L11.16 17.70 L10.70 17.67 L10.23 17.60 L9.77 17.50 L9.31 17.35 L8.86 17.17 L8.42 16.95 L8.00 16.69 L7.60 16.40 L7.22 16.07 L6.86 15.71 L6.53 15.31 L6.23 14.89 L5.97 14.44 L5.74 13.97 L5.54 13.48 L5.39 12.96 L5.27 12.44 L5.20 11.90 L5.18 11.35 L5.19 10.80 L5.26 10.24 L5.36 9.69 L5.52 9.14 L5.72 8.61 L5.96 8.08 L6.25 7.58 L6.57 7.09 L6.94 6.63 L7.35 6.20 L7.80 5.80 L8.28 5.44 L8.79 5.11 L9.33 4.82 L9.90 4.57 L10.49 4.37 L11.10 4.22 L11.72 4.11 L12.35 4.06 L12.99 4.06 L13.64 4.10 L14.28 4.20 L14.92 4.36 L15.54 4.56 L16.15 4.82 L16.75 5.13 L17.32 5.48 L17.86 5.89 L18.37 6.34 L18.85 6.83 L19.29 7.36 L19.69 7.93 L20.04 8.54 L20.35 9.17 L20.60 9.84 L20.80 10.52 L20.95 11.22 L21.04 11.94 L21.08 12.67 L21.05 13.40 L20.97 14.13 L20.82 14.86 L20.62 15.58 L20.36 16.28 L20.04 16.97 L19.66 17.63 L19.23 18.26 L18.75 18.86 L18.21 19.42 L17.63 19.94 L17.01 20.41 L16.35 20.84 L15.65 21.21 L14.92 21.53 L14.16 21.79 L13.38 21.99 L12.58 22.12 L11.77 22.19 L10.95 22.20 L10.13 22.14 L9.31 22.01 L8.50 21.82 L7.70 21.56 L6.92 21.24 L6.17 20.85 L5.44 20.40 L4.75 19.89 L4.10 19.33 L3.50 18.71 L2.94 18.04 L2.44 17.32" fill="none" stroke="#000" stroke-width="1.3" transform="rotate(150 12 12)"/></svg>
<svg class="a" style="left:13px;top:214px" width="24" height="26" viewBox="0 0 24 26"><path d="M4 5 C4 9 3 12 2 20" fill="none" stroke="#555" stroke-width="1"/><path d="M9.5 6 C12 4 16 3.5 19.5 3.5" fill="none" stroke="#555" stroke-width="1"/><rect x="3.8" y="5" width="5.5" height="5.5" fill="#9a9af8" stroke="#0000ee" stroke-width="1.8"/><rect x="0.8" y="20.2" width="3.8" height="3.8" fill="#ccf" stroke="#4444ff" stroke-width="1.2"/><rect x="19.4" y="1.8" width="3.8" height="3.8" fill="#ccf" stroke="#4444ff" stroke-width="1.2"/><path d="M9.5 10.5 L20.5 19 L15.5 23.5 Z" fill="#000"/></svg>
<svg class="a" style="left:13px;top:332px" width="25" height="23" viewBox="0 0 25 23"><defs><linearGradient id="stg" x1="0" y1="0" x2="0" y2="1"><stop offset="0" stop-color="#fff8c8"/><stop offset="1" stop-color="#f0d860"/></linearGradient></defs><path d="M8 0.8 L14.5 4 L13.5 11.5 L3 12.5 L0.8 5.5 Z" fill="url(#stg)" stroke="#222" stroke-width="1"/><path d="M16.00 5.00 L18.12 10.59 L24.08 10.87 L19.42 14.61 L21.00 20.38 L16.00 17.10 L11.00 20.38 L12.58 14.61 L7.92 10.87 L13.88 10.59 Z" fill="url(#stg)" stroke="#222" stroke-width="1"/></svg>
<svg class="a" style="left:14px;top:365px" width="22" height="25" viewBox="0 0 22 25"><defs><linearGradient id="bxg" x1="0" y1="0" x2="1" y2="1"><stop offset="0" stop-color="#c8c8f0"/><stop offset="1" stop-color="#6a6ab8"/></linearGradient></defs><path d="M11 0.8 L21 6.5 V17.5 L11 24 L1 17.5 V6.5 Z" fill="url(#bxg)" stroke="#222" stroke-width="1"/><path d="M11 3.5 L19.5 8 V17 L11 12.5 Z" fill="#dcdcf8" opacity=".8"/><path d="M1.5 17.5 L11 12.5 L20.5 17.5 L11 23.5 Z" fill="#40408a"/></svg>
<div class="a" style="left:1088px;top:172px;width:512px;height:1px;background:#f6f5f4"></div>
<div class="a" style="left:1088px;top:173px;width:1px;height:618px;background:#d9d4cf"></div>
<div class="a" style="left:1089px;top:173px;width:511px;height:511px;background:#fff"></div>
<div class="a" style="left:1089px;top:208px;width:510px;height:1px;background:#dcd7d2"></div>
<div class="a" style="left:1598px;top:208px;width:1px;height:476px;background:#dcd7d2"></div>
<svg class="a" style="left:1089px;top:182px" width="17" height="17" viewBox="0 0 17 17"><defs><linearGradient id="fsg2" x1="0" y1="0" x2="1" y2="0"><stop offset=".3" stop-color="#000"/><stop offset="1" stop-color="#000" stop-opacity=".15"/></linearGradient><linearGradient id="fsg2v" x1="0" y1="0" x2="0" y2="1"><stop offset=".3" stop-color="#000"/><stop offset="1" stop-color="#000" stop-opacity=".15"/></linearGradient><linearGradient id="fsg2y" x1="0" y1="0" x2="0" y2="1"><stop offset="0" stop-color="#ffe820"/><stop offset="1" stop-color="#f08000"/></linearGradient></defs><path d="M1 1 H16 L13 14 L1 16 Z" fill="#fff"/><rect x="0.5" y="0.5" width="16" height="2.2" fill="url(#fsg2)"/><rect x="0.5" y="0.5" width="2.2" height="16" fill="url(#fsg2v)"/><path d="M0.5 16.5 L15.5 1 L16.5 2.5 V7.5 L12.5 11.5 C9.5 14.2 5.5 16 0.5 16.5 Z" fill="#0a0a0a"/><path d="M5 13.5 L13 5.5" stroke="#777" stroke-width=".7" stroke-dasharray="1 1"/><path d="M13 4.2 L16.5 1.5 V7.5 L13.6 10.2 Z" fill="url(#fsg2y)"/></svg>
<div class="t" style="left:1106px;top:184.5px;font-size:12px;color:#2e3436">Füllung und Kontur (Umschalt+Strg+F)</div>
<svg class="a" style="left:1538px;top:179px" width="12" height="12" viewBox="0 0 12 12"><rect x=".5" y=".5" width="11" height="11" rx="2" fill="#fff" stroke="#888"/><path d="M8 3 L4 6 L8 9 Z" fill="#777"/></svg>
<svg class="a" style="left:1574px;top:179px" width="12" height="12" viewBox="0 0 12 12"><rect x=".5" y=".5" width="11" height="11" rx="2" fill="#fff" stroke="#888"/><path d="M3.5 3.5 L8.5 8.5 M8.5 3.5 L3.5 8.5" stroke="#666" stroke-width="1.8"/></svg>
<div class="a" style="left:1093px;top:211px;width:502px;height:344px;border:1px solid #d5d0cb;background:#fff"></div>
<div class="a" style="left:1094px;top:212px;width:500px;height:37px;background:#e2dfdc;border-bottom:1px solid #d5d0cb"></div>
<div class="a" style="left:1102px;top:246px;width:84px;height:3px;background:#3584e4"></div>
<svg class="a" style="left:1114px;top:222px" width="16" height="16" viewBox="0 0 16 16"><defs><linearGradient id="tg1" x1="0" y1="0" x2="1" y2="1"><stop offset="0" stop-color="#9fb8d8"/><stop offset="1" stop-color="#f4f7fb"/></linearGradient></defs><rect x="0" y="0" width="16" height="16" fill="url(#tg1)"/></svg>
<div class="t" style="left:1134px;top:224.5px;font-size:11.8px;font-weight:bold;color:#2e3436">Füllung</div>
<svg class="a" style="left:1206px;top:222px" width="16" height="16" viewBox="0 0 16 16"><defs><linearGradient id="tg2" x1="0" y1="0" x2="1" y2="1"><stop offset="0" stop-color="#000"/><stop offset="1" stop-color="#ccc"/></linearGradient></defs><rect x=".7" y=".7" width="14.6" height="14.6" fill="none" stroke="url(#tg2)" stroke-width="1.4"/></svg>
<div class="t" style="left:1226px;top:224.5px;font-size:11.8px;font-weight:bold;color:#929595">Farbe der Kontur</div>
<svg class="a" style="left:1352px;top:222px" width="16" height="16" viewBox="0 0 16 16"><path d="M0 3.5 H14" stroke="#000" stroke-width="1.6"/><path d="M11 0.5 L15 3.5 L11 6.5 Z" fill="#000"/><path d="M0 9 H16" stroke="#000" stroke-width="1.6" stroke-dasharray="2.5 1.5"/><path d="M0 14.5 H16" stroke="#000" stroke-width="1.6"/></svg>
<div class="t" style="left:1373px;top:224.5px;font-size:11.8px;font-weight:bold;color:#929595">Muster der Kontur</div>
<svg class="a" style="left:1114px;top:268px" width="12" height="12" viewBox="0 0 12 12"><path d="M2 2 L10 10 M10 2 L2 10" stroke="#b8b8b8" stroke-width="1.5"/></svg>
<svg class="a" style="left:1148px;top:266px" width="17" height="17" viewBox="0 0 17 17"><rect x=".5" y=".5" width="16" height="16" fill="#e3e9f2" stroke="#c8c8c8"/></svg>
<svg class="a" style="left:1184px;top:266px" width="17" height="17" viewBox="0 0 17 17"><rect x=".5" y=".5" width="16" height="16" fill="#f4f6fa" stroke="#c8c8c8"/></svg>
<svg class="a" style="left:1220px;top:266px" width="17" height="17" viewBox="0 0 17 17"><rect x=".5" y=".5" width="16" height="16" fill="#eef2f7" stroke="#c8c8c8"/></svg>
<svg class="a" style="left:1256px;top:266px" width="17" height="17" viewBox="0 0 17 17"><rect x=".5" y=".5" width="16" height="16" fill="#fff" stroke="#c8c8c8"/><rect x="1" y="1" width="7.5" height="7.5" fill="#dde5f0"/><rect x="8.5" y="8.5" width="7.5" height="7.5" fill="#dde5f0"/></svg>
<svg class="a" style="left:1292px;top:266px" width="17" height="17" viewBox="0 0 17 17"><rect x=".5" y=".5" width="16" height="16" fill="#f2f5fa" stroke="#c8c8c8"/><circle cx="8.5" cy="8.5" r="3" fill="#fff"/></svg>
<svg class="a" style="left:1328px;top:266px" width="17" height="17" viewBox="0 0 17 17"><rect x=".5" y=".5" width="16" height="16" fill="#fff" stroke="#c8c8c8"/><path d="M3 14 H14 V3" fill="none" stroke="#bbb" stroke-width="1.2"/></svg>
<div class="t" style="left:1366px;top:266px;font-size:15px;font-weight:bold;color:#c4c4c4">?</div>
<svg class="a" style="left:1400px;top:266px" width="17" height="17" viewBox="0 0 17 17"><path d="M8.5 16 C3 16 1.5 11 1.5 6 C1.5 2 4 1 6 3 L8.5 5.5 L11 3 C13 1 15.5 2 15.5 6 C15.5 11 14 16 8.5 16 Z" fill="#c0c0c0"/><circle cx="8.5" cy="10" r="3" fill="#fff"/></svg>
<div class="a" style="left:1426px;top:257px;width:36px;height:34px;background:#e6e5e2;border:1px solid #d4cfca;border-radius:5px"></div>
<svg class="a" style="left:1436px;top:266px" width="17" height="17" viewBox="0 0 17 17"><path d="M8.5 16 C3 16 1.5 11 1.5 6 C1.5 2 4 1 6 3 L8.5 5.5 L11 3 C13 1 15.5 2 15.5 6 C15.5 11 14 16 8.5 16 Z" fill="#b4b6b2"/></svg>
<div class="t" style="left:1102px;top:301.5px;font-size:11.8px;font-weight:bold;color:#2e3436">Keine Objekte</div>
<div class="t" style="right:207px;top:573px;font-size:11.7px;color:#8e9192">Mischmodus:</div>
<div class="a" style="left:1403px;top:562px;width:182px;height:34px;background:#f8f7f6;border:1px solid #d3ccc6;border-radius:5px"></div>
<div class="t" style="left:1415px;top:573px;font-size:11.7px;color:#8e9192">Normal</div>
<svg class="a" style="left:1561px;top:575px" width="12" height="8" viewBox="0 0 12 8"><path d="M1 1 H11 L6 6.5 Z" fill="#8e9192"/></svg>
<div class="a" style="left:1093px;top:604px;width:502px;height:1px;background:#e5e1dd"></div>
<div class="a" style="left:1522px;top:613px;width:73px;height:64px;background:#f8f7f6"></div>
<div class="a" style="left:1561px;top:613px;width:1px;height:64px;background:#e6e2de"></div>
<div class="a" style="left:1578px;top:613px;width:1px;height:64px;background:#e6e2de"></div>
<div class="a" style="left:1093px;top:613px;width:430px;height:32px;background:#faf9f8;border:1px solid #d3ccc6;border-radius:5px"></div>
<div class="a" style="left:1093px;top:645px;width:430px;height:32px;background:#faf9f8;border:1px solid #d3ccc6;border-radius:5px"></div>
<div class="t" style="left:1098px;top:624.5px;font-size:11.8px;color:#8e9192">Unschärfe (%)</div>
<div class="t" style="left:1098px;top:656.5px;font-size:11.8px;color:#fbfbfa">Deckkraft (%)</div>
<div class="t" style="left:1525px;top:624.5px;font-size:11.8px;color:#8e9192;letter-spacing:.6px">0,0</div>
<div class="t" style="left:1525px;top:656.5px;font-size:11.8px;color:#8e9192;letter-spacing:.6px">100,0</div>
<div class="a" style="left:1564px;top:629px;width:11px;height:1.3px;background:#d0d0d0"></div>
<div class="a" style="left:1581px;top:629px;width:11px;height:1.3px;background:#d0d0d0"></div>
<div class="a" style="left:1585.8px;top:624px;width:1.3px;height:11px;background:#d0d0d0"></div>
<div class="a" style="left:1564px;top:661px;width:11px;height:1.3px;background:#d0d0d0"></div>
<div class="a" style="left:1581px;top:661px;width:11px;height:1.3px;background:#d0d0d0"></div>
<div class="a" style="left:1585.8px;top:656px;width:1.3px;height:11px;background:#d0d0d0"></div>
<div class="a" style="left:1089px;top:682px;width:510px;height:2px;background:#d8d3ce"></div>
<div class="a" style="left:1089px;top:684px;width:510px;height:34px;background:#f0efed;border:1px solid #d5d0cb;border-radius:5px 5px 0 0"></div>
<svg class="a" style="left:1098px;top:692px" width="17" height="17" viewBox="0 0 17 17"><rect x="0.5" y="0" width="1" height="17" fill="#d02020"/><rect x="2.5" y="1" width="6" height="4" fill="#a8c4e4" stroke="#334" stroke-width=".8"/><rect x="2.5" y="6.5" width="13" height="4" fill="#a8c4e4" stroke="#334" stroke-width=".8"/><rect x="2.5" y="12" width="10" height="4" fill="#a8c4e4" stroke="#334" stroke-width=".8"/></svg>
<div class="t" style="left:1118px;top:694.5px;font-size:12px;color:#2e3436">Ausrichten und verteilen (Umschalt+Strg+A)</div>
<svg class="a" style="left:1575px;top:695px" width="12" height="8" viewBox="0 0 12 8"><path d="M1.5 6.5 L6 2 L10.5 6.5" fill="none" stroke="#2e3436" stroke-width="1.7"/></svg>
<div class="a" style="left:1089px;top:717px;width:510px;height:34px;background:#f0efed;border:1px solid #d5d0cb;border-radius:5px 5px 0 0"></div>
<svg class="a" style="left:1098px;top:725px" width="17" height="17" viewBox="0 0 17 17"><path d="M1 .5 H9 L12 3.5 V16.5 H1 Z" fill="#fff" stroke="#111"/><path d="M6 9 H15 M12.5 6.5 L15.5 9 L12.5 11.5" fill="none" stroke="#111" stroke-width="1.2"/></svg>
<div class="t" style="left:1118px;top:727.5px;font-size:12px;color:#2e3436">PNG-Bild exportieren (Umschalt+Strg+E)</div>
<svg class="a" style="left:1575px;top:728px" width="12" height="8" viewBox="0 0 12 8"><path d="M1.5 6.5 L6 2 L10.5 6.5" fill="none" stroke="#2e3436" stroke-width="1.7"/></svg>
<div class="a" style="left:1089px;top:750px;width:510px;height:35px;background:#d9d5d1;border:1px solid #d5d0cb;border-radius:5px 5px 0 0"></div>
<svg class="a" style="left:1098px;top:758px" width="17" height="17" viewBox="0 0 17 17"><defs><linearGradient id="fsg3" x1="0" y1="0" x2="1" y2="0"><stop offset=".3" stop-color="#000"/><stop offset="1" stop-color="#000" stop-opacity=".15"/></linearGradient><linearGradient id="fsg3v" x1="0" y1="0" x2="0" y2="1"><stop offset=".3" stop-color="#000"/><stop offset="1" stop-color="#000" stop-opacity=".15"/></linearGradient><linearGradient id="fsg3y" x1="0" y1="0" x2="0" y2="1"><stop offset="0" stop-color="#ffe820"/><stop offset="1" stop-color="#f08000"/></linearGradient></defs><path d="M1 1 H16 L13 14 L1 16 Z" fill="#fff"/><rect x="0.5" y="0.5" width="16" height="2.2" fill="url(#fsg3)"/><rect x="0.5" y="0.5" width="2.2" height="16" fill="url(#fsg3v)"/><path d="M0.5 16.5 L15.5 1 L16.5 2.5 V7.5 L12.5 11.5 C9.5 14.2 5.5 16 0.5 16.5 Z" fill="#0a0a0a"/><path d="M5 13.5 L13 5.5" stroke="#777" stroke-width=".7" stroke-dasharray="1 1"/><path d="M13 4.2 L16.5 1.5 V7.5 L13.6 10.2 Z" fill="url(#fsg3y)"/></svg>
<div class="t" style="left:1118px;top:760.5px;font-size:12px;color:#2e3436">Füllung und Kontur (Umschalt+Strg+F)</div>
<svg class="a" style="left:1575px;top:761px" width="12" height="8" viewBox="0 0 12 8"><path d="M1.5 6.5 L6 2 L10.5 6.5" fill="none" stroke="#2e3436" stroke-width="1.7"/></svg>
<div class="a" style="left:1089px;top:716px;width:510px;height:2px;background:#d6d1cc"></div>
<div class="a" style="left:1089px;top:749px;width:510px;height:2px;background:#d6d1cc"></div>
<div class="a" style="left:1089px;top:785px;width:511px;height:7px;background:#f6f5f4"></div>
<div class="a" style="left:1089px;top:786px;width:510px;height:1px;background:#dedad6"></div>
<svg class="a" style="left:1576px;top:802.5px" width="10" height="14" viewBox="0 0 10 14"><path d="M8 2 L3 6.5 L8 11 Z" fill="#2e3436"/></svg>
<div class="a" style="left:0px;top:826px;width:1564px;height:34px;background:#f6f5f4"></div>
<div class="t" style="left:2px;top:828.6px;font-size:11.7px">Füllung:</div>
<div class="t" style="left:49px;top:828.6px;font-size:11.7px">N/V</div>
<div class="t" style="left:2px;top:845.3px;font-size:11.7px">Kontur:</div>
<div class="t" style="left:49px;top:845.3px;font-size:11.7px">N/V</div>
<div class="t" style="left:72.5px;top:837px;font-size:11.7px">O:</div>
<div class="a" style="left:86px;top:827px;width:68px;height:33px;background:#faf9f8;border:1px solid #d3ccc6;border-radius:5px"></div>
<div class="a" style="left:119px;top:828px;width:1px;height:31px;background:#e9e5e1"></div>
<div class="a" style="left:136px;top:828px;width:1px;height:31px;background:#e9e5e1"></div>
<div class="t" style="left:89px;top:837px;font-size:11.7px;color:#a0a3a4;letter-spacing:.6px">100</div>
<div class="a" style="left:122px;top:843px;width:10px;height:1.3px;background:#d0d0d0"></div>
<div class="a" style="left:139px;top:843px;width:10px;height:1.3px;background:#d0d0d0"></div>
<div class="a" style="left:143.4px;top:838.4px;width:1.3px;height:10px;background:#d0d0d0"></div>
<svg class="a" style="left:201px;top:835px" width="18" height="15" viewBox="0 0 18 15"><path d="M1 9 C4.5 4.5 13.5 4.5 17 9 C13.5 13.5 4.5 13.5 1 9 Z" fill="#fff" stroke="#111" stroke-width="1.5"/><circle cx="9" cy="9" r="3" fill="#111"/><circle cx="8.2" cy="8.2" r=".9" fill="#fff"/><path d="M4 5.5 L3 3 M7 4.5 L6.5 1.5 M11 4.5 L11.5 1.5 M14 5.5 L15 3" stroke="#111" stroke-width="1.2"/></svg>
<div class="a" style="left:229px;top:827px;width:36px;height:33px;background:#d8d4d0;border-radius:5px"></div>
<div class="a" style="left:232px;top:830px;width:30px;height:27px;border:1px dashed #a9a5a1;border-radius:3px"></div>
<svg class="a" style="left:239px;top:835px" width="16" height="16" viewBox="0 0 16 16"><defs><linearGradient id="lk" x1="0" y1="0" x2="0" y2="1"><stop offset="0" stop-color="#f08a00"/><stop offset="1" stop-color="#ffe070"/></linearGradient></defs><path d="M4.5 8 V5.5 A4 4 0 0 1 12.5 5.5 V8" fill="none" stroke="#222" stroke-width="1.8"/><rect x="2" y="8" width="13" height="8.5" rx="1" fill="url(#lk)" stroke="#222" stroke-width="1.1"/><circle cx="8.5" cy="11.3" r="1.1" fill="#111"/><rect x="7.9" y="11.5" width="1.2" height="2.5" fill="#111"/></svg>
<div class="a" style="left:264px;top:827px;width:90px;height:33px;background:#f6f5f4;border:1px solid #d3ccc6;border-radius:5px;border-left:none"></div>
<div class="t" style="left:277.5px;top:838.5px;font-size:10.2px;font-weight:bold;color:#2e3436">•[Ebene 1]</div>
<svg class="a" style="left:331px;top:839px" width="12" height="8" viewBox="0 0 12 8"><path d="M1 1 H11 L6 6.5 Z" fill="#2e3436"/></svg>
<div class="t" style="left:355px;top:837.5px;font-size:12px;color:#2e3436;letter-spacing:1px">Eine neue Ebene anlegen</div>
<div class="a" style="left:1243px;top:825px;width:1px;height:35px;background:#dcd8d4"></div>
<div class="t" style="left:1254px;top:828.2px;font-size:11.7px">X:</div>
<div class="t" style="right:279px;top:828.2px;font-size:11.7px;letter-spacing:.7px">-8,08</div>
<div class="t" style="left:1254px;top:845.3px;font-size:11.7px">Y:</div>
<div class="t" style="right:279px;top:845.3px;font-size:11.7px;letter-spacing:.7px">264,66</div>
<div class="t" style="left:1332px;top:837px;font-size:11.7px">Z:</div>
<div class="a" style="left:1352px;top:827px;width:100px;height:33px;background:#fff;border:1px solid #d3ccc6;border-radius:5px"></div>
<div class="a" style="left:1407px;top:828px;width:1px;height:31px;background:#ebe8e5"></div>
<div class="a" style="left:1428px;top:828px;width:1px;height:31px;background:#ebe8e5"></div>
<div class="t" style="left:1365px;top:837px;font-size:11.7px">50%</div>
<div class="a" style="left:1411px;top:842.6px;width:12px;height:1.6px;background:#2e3436"></div>
<div class="a" style="left:1432px;top:842.6px;width:12px;height:1.6px;background:#2e3436"></div>
<div class="a" style="left:1437.2px;top:837.4px;width:1.6px;height:12px;background:#2e3436"></div>
<div class="t" style="left:1462px;top:837px;font-size:11.7px">R:</div>
<div class="a" style="left:1483px;top:827px;width:107px;height:33px;background:#fff;border:1px solid #d3ccc6;border-radius:5px"></div>
<div class="a" style="left:1545px;top:828px;width:1px;height:31px;background:#ebe8e5"></div>
<div class="a" style="left:1566px;top:828px;width:1px;height:31px;background:#ebe8e5"></div>
<div class="t" style="left:1499px;top:837px;font-size:11.7px;letter-spacing:.7px">0,00°</div>
<div class="a" style="left:1550px;top:842.6px;width:12px;height:1.6px;background:#2e3436"></div>
<div class="a" style="left:1571px;top:842.6px;width:12px;height:1.6px;background:#2e3436"></div>
<div class="a" style="left:1576.2px;top:837.4px;width:1.6px;height:12px;background:#2e3436"></div>
<div class="a" style="left:0px;top:860px;width:1600px;height:40px;background:linear-gradient(90deg,#e4e4d8 0px,#e3e2d4 450px,#e0dfd0 777px,#e4e4d8 900px,#e6e7dd 1000px,#e4e3d3 1150px,#e3e0cd 1400px,#e2e0cf 1600px)"></div>
<svg class="a" style="left:16px;top:872px" width="16" height="16" viewBox="0 0 16 16"><path d="M0 2.2 L6.5 1.3 V7.4 H0 Z M7.5 1.1 L16 0 V7.4 H7.5 Z M0 8.5 H6.5 V14.7 L0 13.8 Z M7.5 8.5 H16 V16 L7.5 14.9 Z" fill="#000"/></svg>
<svg class="a" style="left:62px;top:868px" width="25" height="24" viewBox="0 0 25 24"><defs><radialGradient id="tb" cx=".45" cy=".4" r=".6"><stop offset="0" stop-color="#8cc8f8"/><stop offset=".7" stop-color="#3a86d8"/><stop offset="1" stop-color="#1a4aa0"/></radialGradient></defs><circle cx="12.5" cy="12" r="11.5" fill="url(#tb)"/><path d="M2 9 C4 3 10 0 16 1 C11 3 9 6 8 9 Z" fill="#1a3f8c"/><path d="M5 10 L13 6 L21 9 L20 17 L9 19 L5 15 Z" fill="#f6f6f6" stroke="#9ab" stroke-width=".6"/><path d="M5 10 L12 13.5 L21 9" fill="none" stroke="#9ab" stroke-width=".8"/><path d="M9 19 C13 22 18 20 21 16 L20 22 C16 24 11 24 9 19Z" fill="#1a4aa0"/></svg>
<svg class="a" style="left:113px;top:870px" width="15" height="19" viewBox="0 0 15 19"><path d="M1 2 L8 0 V19 L1 17 Z" fill="#e8c060"/><path d="M4 3 H14 V18 H4 Z" fill="#f8dc88"/><path d="M1 2 L8 0 V19 L1 17 Z" fill="#f0cc68" opacity=".9"/></svg>
<div class="t" style="left:138px;top:874.2px;font-size:12px;color:#000">BildGrafik</div>
<div class="a" style="left:104px;top:897px;width:152px;height:3px;background:#0078d7"></div>
<svg class="a" style="left:274px;top:869px" width="23" height="23" viewBox="0 0 23 23"><circle cx="11.5" cy="11.5" r="11" fill="#0a9ee8"/><circle cx="6" cy="6" r="5" fill="#0a9ee8"/><circle cx="17" cy="17" r="5" fill="#0a9ee8"/><text x="11.5" y="17" text-anchor="middle" font-family="Liberation Sans" font-weight="bold" font-size="15" fill="#fff">S</text></svg>
<svg class="a" style="left:322px;top:868px" width="24" height="24" viewBox="0 0 24 24"><circle cx="12" cy="12" r="11.5" fill="#db4437"/><path d="M12 12 L22 17.8 A11.5 11.5 0 0 1 2 17.8 Z" fill="#0f9d58"/><path d="M12 12 L12 0.5 A11.5 11.5 0 0 1 22 17.8 Z" fill="#f4b400"/><circle cx="12" cy="12" r="5" fill="#fff"/><circle cx="12" cy="12" r="4" fill="#4285f4"/></svg>
<svg class="a" style="left:371px;top:868px" width="25" height="24" viewBox="0 0 25 24"><ellipse cx="11" cy="15" rx="9" ry="5.5" transform="rotate(-22 11 15)" fill="none" stroke="#f0a0a0" stroke-width="1"/><ellipse cx="13" cy="10" rx="9.5" ry="5.5" transform="rotate(-22 13 10)" fill="#f4f4f8" stroke="#e03030" stroke-width="1.2"/><path d="M7 10 L14 13 M12 5 L14 13" stroke="#555" stroke-width="1"/><ellipse cx="16.5" cy="16" rx="2.2" ry="3.2" transform="rotate(40 16.5 16)" fill="none" stroke="#1a80d0" stroke-width="1.5"/><ellipse cx="14" cy="20" rx="1.8" ry="3.2" transform="rotate(10 14 20)" fill="none" stroke="#1a80d0" stroke-width="1.5"/></svg>
<svg class="a" style="left:420px;top:869px" width="24" height="22" viewBox="0 0 24 22"><defs><linearGradient id="mg" x1="0" y1="0" x2="1" y2="0"><stop offset="0" stop-color="#fafafa"/><stop offset="1" stop-color="#cfcfcf"/></linearGradient></defs><path d="M1 20 L11 1.5 H16 L23.5 20 H18 L13 7 L6 20 Z" fill="url(#mg)" stroke="#b8b8b8" stroke-width=".7"/><path d="M2 6 L3 3 L4 6 L5 2 L6 6 L7 1.5 L8 6 L9 2.5 L10 6 L10.5 4 L11 8 L6.5 14 L6 18 L5.5 14 L1.5 9 Z" fill="#d83a20"/></svg>
<svg class="a" style="left:466px;top:868px" width="25" height="25" viewBox="0 0 25 25"><defs><linearGradient id="ikg" x1="0" y1="0" x2="1" y2="1"><stop offset="0" stop-color="#666"/><stop offset=".5" stop-color="#111"/><stop offset="1" stop-color="#000"/></linearGradient></defs><path d="M12.5 0.8 L24.2 11.5 L19 15.5 L12.5 17.5 L6 15.5 L0.8 11.5 Z" fill="url(#ikg)"/><path d="M12.5 1.2 L18.5 6.8 L16 7.2 L14 5.8 L11.8 8.2 L9.5 6.5 L6.8 7 Z" fill="#f4f4f4"/><path d="M7 15 C8 18 10 20.5 13 21.5 C15.5 21 17 19 18 15.5 Z" fill="#111"/><path d="M4 14.5 H9 M3.5 17 H8" stroke="#111" stroke-width="1.6"/><path d="M17.5 18.5 H21.5 M19 21 H22" stroke="#111" stroke-width="1.4"/><ellipse cx="12.5" cy="23.2" rx="3" ry="1.3" fill="#111"/></svg>
<div class="t" style="left:495px;top:874.2px;font-size:11.7px;color:#000">*Neues Dokument ...</div>
<div class="a" style="left:461px;top:897px;width:152px;height:3px;background:#0078d7"></div>
<svg class="a" style="left:626px;top:868px" width="25" height="25" viewBox="0 0 25 25"><defs><linearGradient id="ikg" x1="0" y1="0" x2="1" y2="1"><stop offset="0" stop-color="#666"/><stop offset=".5" stop-color="#111"/><stop offset="1" stop-color="#000"/></linearGradient></defs><path d="M12.5 0.8 L24.2 11.5 L19 15.5 L12.5 17.5 L6 15.5 L0.8 11.5 Z" fill="url(#ikg)"/><path d="M12.5 1.2 L18.5 6.8 L16 7.2 L14 5.8 L11.8 8.2 L9.5 6.5 L6.8 7 Z" fill="#f4f4f4"/><path d="M7 15 C8 18 10 20.5 13 21.5 C15.5 21 17 19 18 15.5 Z" fill="#111"/><path d="M4 14.5 H9 M3.5 17 H8" stroke="#111" stroke-width="1.6"/><path d="M17.5 18.5 H21.5 M19 21 H22" stroke="#111" stroke-width="1.4"/><ellipse cx="12.5" cy="23.2" rx="3" ry="1.3" fill="#111"/></svg>
<div class="t" style="left:655px;top:874.2px;font-size:11.7px;color:#000">WapZinn.svg - Inks...</div>
<div class="a" style="left:621px;top:897px;width:152px;height:3px;background:#0078d7"></div>
<div class="a" style="left:777px;top:860px;width:160px;height:40px;background:#efefe9"></div>
<svg class="a" style="left:786px;top:868px" width="25" height="25" viewBox="0 0 25 25"><defs><linearGradient id="ikg" x1="0" y1="0" x2="1" y2="1"><stop offset="0" stop-color="#666"/><stop offset=".5" stop-color="#111"/><stop offset="1" stop-color="#000"/></linearGradient></defs><path d="M12.5 0.8 L24.2 11.5 L19 15.5 L12.5 17.5 L6 15.5 L0.8 11.5 Z" fill="url(#ikg)"/><path d="M12.5 1.2 L18.5 6.8 L16 7.2 L14 5.8 L11.8 8.2 L9.5 6.5 L6.8 7 Z" fill="#f4f4f4"/><path d="M7 15 C8 18 10 20.5 13 21.5 C15.5 21 17 19 18 15.5 Z" fill="#111"/><path d="M4 14.5 H9 M3.5 17 H8" stroke="#111" stroke-width="1.6"/><path d="M17.5 18.5 H21.5 M19 21 H22" stroke="#111" stroke-width="1.4"/><ellipse cx="12.5" cy="23.2" rx="3" ry="1.3" fill="#111"/></svg>
<div class="t" style="left:815px;top:874.2px;font-size:11.7px;color:#000">*Massstabblatt.svg ...</div>
<div class="a" style="left:777px;top:897px;width:160px;height:3px;background:#0078d7"></div>
<svg class="a" style="left:1391px;top:876px" width="12" height="8" viewBox="0 0 12 8"><path d="M1 7 L6 1.5 L11 7" fill="none" stroke="#000" stroke-width="1.3"/></svg>
<svg class="a" style="left:1415px;top:874px" width="15" height="14" viewBox="0 0 15 14"><path d="M1 13 A12 12 0 0 1 13 1 M4 13 A9 9 0 0 1 13 4 M7 13 A6 6 0 0 1 13 7" fill="none" stroke="#333" stroke-width="1.1"/><circle cx="10.5" cy="11.5" r="1.5" fill="#111"/></svg>
<svg class="a" style="left:1436px;top:874px" width="18" height="12" viewBox="0 0 18 12"><path d="M4 1 V4 M7 1 V4 M2.5 4 H8.5 V6 C8.5 8 4.5 9 4.5 11" fill="none" stroke="#111" stroke-width="1.1"/><rect x="6" y="2.5" width="10" height="8" fill="none" stroke="#111" stroke-width="1.1"/><rect x="16" y="5" width="1.5" height="3" fill="#111"/><rect x="7.5" y="6" width="3" height="3" fill="#111"/></svg>
<svg class="a" style="left:1460px;top:873px" width="18" height="14" viewBox="0 0 18 14"><path d="M1 5 H4 L8 1.5 V12.5 L4 9 H1 Z" fill="none" stroke="#111" stroke-width="1.1"/><path d="M10.5 4.5 C11.7 6 11.7 8 10.5 9.5 M13 2.5 C15 5 15 9 13 11.5 M15.5 1 C18 5 18 9 15.5 13" fill="none" stroke="#222" stroke-width="1.1"/></svg>
<div class="t" style="left:1501px;top:864.8px;font-size:11.6px;color:#000;letter-spacing:-.6px">14:46</div>
<div class="t" style="left:1488px;top:882.6px;font-size:11.6px;color:#000;letter-spacing:-.5px">10.02.2021</div>
<svg class="a" style="left:1559px;top:871px" width="24" height="24" viewBox="0 0 24 24"><path d="M1 1 H16 V11 H6 L3 14 V11 H1 Z" fill="#111"/><path d="M3.5 4 H13.5 M3.5 6.5 H13.5 M3.5 9 H10" stroke="#fff" stroke-width="1"/><circle cx="15" cy="16" r="7.3" fill="#d8d8d8" stroke="#888" stroke-width="1"/><text x="15" y="20" text-anchor="middle" font-family="Liberation Sans" font-size="11" fill="#111">1</text></svg>
<div class="a" style="left:1595px;top:860px;width:1px;height:40px;background:#c8c8bc"></div>
<div class="a" style="left:189px;top:829px;width:79px;height:37px;border:2px solid #ff0000"></div>
<div class="a" style="left:169px;top:47px;width:460px;height:391px;background:#fff;border:1px solid #cdc7c2;border-top:none;box-shadow:1px 1px 2px rgba(0,0,0,.14)"></div>
<div class="t" style="left:202px;top:53.6px;font-size:11.7px;color:#2e3436">Ebenen...</div>
<div class="t" style="right:981px;top:53.6px;font-size:11.8px;color:#8f9394">Umschalt+Strg+L</div>
<div class="a" style="left:170px;top:72px;width:456px;height:24px;background:#3584e4"></div>
<div class="a" style="left:168px;top:70px;width:459px;height:28px;border:2px solid #ff0000"></div>
<div class="t" style="left:202px;top:77.6px;font-size:11.7px;color:#fff">Ebene hinzufügen...</div>
<div class="t" style="left:202px;top:101.6px;font-size:11.7px;color:#2e3436">Ebene umbenennen...</div>
<div class="a" style="left:170px;top:120px;width:458px;height:1px;background:#e6e3e0"></div>
<div class="t" style="left:202px;top:126.6px;font-size:11.7px;color:#2e3436">Aktuelle Ebene ein-/ausblenden</div>
<div class="t" style="left:202px;top:150.6px;font-size:11.7px;color:#2e3436">Aktuelle Ebene sperren/entsperren</div>
<div class="a" style="left:170px;top:169px;width:458px;height:1px;background:#e6e3e0"></div>
<div class="t" style="left:202px;top:175.6px;font-size:11.7px;color:#2e3436">Zur darüberliegenden Ebene umschalten</div>
<div class="t" style="right:981px;top:175.6px;font-size:11.8px;color:#8f9394">Strg+Bild auf</div>
<svg class="a" style="left:179px;top:174px" width="18" height="16" viewBox="0 0 18 16"><path d="M3 2 H15 L17 6 H5 Z" fill="#c8d8ec" stroke="#333" stroke-width=".9"/><path d="M3 10 H15 L17 14 H5 Z" fill="#fff" stroke="#999" stroke-width=".9"/><path d="M10 12 V4 M8 6 L10 3.5 L12 6" fill="none" stroke="#111" stroke-width="1.2"/></svg>
<div class="t" style="left:202px;top:199.6px;font-size:11.7px;color:#2e3436">Zur darunterliegenden Ebene umschalten</div>
<div class="t" style="right:981px;top:199.6px;font-size:11.8px;color:#8f9394">Strg+Bild ab</div>
<svg class="a" style="left:179px;top:198px" width="18" height="16" viewBox="0 0 18 16"><path d="M3 2 H15 L17 6 H5 Z" fill="#fff" stroke="#999" stroke-width=".9"/><path d="M3 10 H15 L17 14 H5 Z" fill="#c8d8ec" stroke="#333" stroke-width=".9"/><path d="M10 3 V11 M8 9 L10 11.5 L12 9" fill="none" stroke="#111" stroke-width="1.2"/></svg>
<div class="a" style="left:170px;top:218px;width:458px;height:1px;background:#e6e3e0"></div>
<div class="t" style="left:202px;top:224.6px;font-size:11.7px;color:#2e3436">Auswahl zur darüberliegenden Ebene verschieben</div>
<div class="t" style="right:981px;top:224.6px;font-size:11.8px;color:#8f9394">Umschalt+Bild auf</div>
<svg class="a" style="left:179px;top:223px" width="18" height="16" viewBox="0 0 18 16"><path d="M2 2 H13 L15 6 H4 Z" fill="none" stroke="#555" stroke-width=".9" stroke-dasharray="1.2 1"/><path d="M2 10 H13 L15 14 H4 Z" fill="#fff" stroke="#333" stroke-width=".9"/><path d="M9 12 V3 M7 5 L9 2.5 L11 5" fill="none" stroke="#111" stroke-width="1.2"/></svg>
<div class="t" style="left:202px;top:248.6px;font-size:11.7px;color:#2e3436">Auswahl zur darunterliegenden Ebene verschieben</div>
<div class="t" style="right:981px;top:248.6px;font-size:11.8px;color:#8f9394">Umschalt+Bild ab</div>
<svg class="a" style="left:179px;top:247px" width="18" height="16" viewBox="0 0 18 16"><path d="M2 2 H13 L15 6 H4 Z" fill="none" stroke="#555" stroke-width=".9" stroke-dasharray="1.2 1"/><path d="M2 10 H13 L15 14 H4 Z" fill="#fff" stroke="#333" stroke-width=".9"/><path d="M9 3 V12 M7 10 L9 12.5 L11 10" fill="none" stroke="#111" stroke-width="1.2"/></svg>
<div class="t" style="left:202px;top:272.6px;font-size:11.7px;color:#2e3436">Auswahl zur anderer Ebene verschieben</div>
<svg class="a" style="left:179px;top:271px" width="18" height="16" viewBox="0 0 18 16"><path d="M2 2 H13 L15 6 H4 Z" fill="none" stroke="#555" stroke-width=".9" stroke-dasharray="1.2 1"/><path d="M2 10 H13 L15 14 H4 Z" fill="#fff" stroke="#333" stroke-width=".9"/><path d="M6 7 H15 M13 5 L15.5 7 L13 9" fill="none" stroke="#111" stroke-width="1.2"/></svg>
<div class="a" style="left:170px;top:291px;width:458px;height:1px;background:#e6e3e0"></div>
<div class="t" style="left:202px;top:297.6px;font-size:11.7px;color:#2e3436">Ebene anheben</div>
<div class="t" style="right:981px;top:297.6px;font-size:11.8px;color:#8f9394">Umschalt+Strg+Bild auf</div>
<svg class="a" style="left:179px;top:296px" width="18" height="16" viewBox="0 0 18 16"><path d="M2 3 H13 L16 7 H5 Z" fill="#fff" stroke="#333" stroke-width=".9"/><path d="M2 11 H13 L16 15 H5 Z" fill="#fff" stroke="#333" stroke-width=".9"/><path d="M2 7 H13 L16 11 H5 Z" fill="#f5c000" stroke="#333" stroke-width=".9"/><path d="M9 12 V3 M7 5.5 L9 3 L11 5.5" fill="none" stroke="#111" stroke-width="1.2"/></svg>
<div class="t" style="left:202px;top:321.6px;font-size:11.7px;color:#2e3436">Ebene absenken</div>
<div class="t" style="right:981px;top:321.6px;font-size:11.8px;color:#8f9394">Umschalt+Strg+Bild ab</div>
<svg class="a" style="left:179px;top:320px" width="18" height="16" viewBox="0 0 18 16"><path d="M2 3 H13 L16 7 H5 Z" fill="#fff" stroke="#333" stroke-width=".9"/><path d="M2 7 H13 L16 11 H5 Z" fill="#f5c000" stroke="#333" stroke-width=".9"/><path d="M2 11 H13 L16 15 H5 Z" fill="#fff" stroke="#333" stroke-width=".9"/><path d="M9 3 V13 M7 10.5 L9 13 L11 10.5" fill="none" stroke="#111" stroke-width="1.2"/></svg>
<div class="t" style="left:202px;top:345.6px;font-size:11.7px;color:#2e3436">Ebene nach ganz oben</div>
<div class="t" style="right:981px;top:345.6px;font-size:11.8px;color:#8f9394">Umschalt+Strg+Pos1</div>
<svg class="a" style="left:179px;top:344px" width="18" height="16" viewBox="0 0 18 16"><path d="M2 3 H13 L16 7 H5 Z" fill="#fff" stroke="#333" stroke-width=".9"/><path d="M2 11 H13 L16 15 H5 Z" fill="#fff" stroke="#333" stroke-width=".9"/><path d="M2 7 H13 L16 11 H5 Z" fill="#f5c000" stroke="#333" stroke-width=".9"/><path d="M9 12 V3 M7 5.5 L9 3 L11 5.5" fill="none" stroke="#111" stroke-width="1.2"/></svg>
<div class="t" style="left:202px;top:369.6px;font-size:11.7px;color:#2e3436">Ebene nach ganz unten</div>
<div class="t" style="right:981px;top:369.6px;font-size:11.8px;color:#8f9394">Umschalt+Strg+Ende</div>
<svg class="a" style="left:179px;top:368px" width="18" height="16" viewBox="0 0 18 16"><path d="M2 3 H13 L16 7 H5 Z" fill="#fff" stroke="#333" stroke-width=".9"/><path d="M2 7 H13 L16 11 H5 Z" fill="#fff" stroke="#333" stroke-width=".9"/><path d="M2 11 H13 L16 15 H5 Z" fill="#f5c000" stroke="#333" stroke-width=".9"/><path d="M9 3 V13 M7 10.5 L9 13 L11 10.5" fill="none" stroke="#111" stroke-width="1.2"/></svg>
<div class="a" style="left:170px;top:388px;width:458px;height:1px;background:#e6e3e0"></div>
<div class="t" style="left:202px;top:394.6px;font-size:11.7px;color:#2e3436">Aktuelle Ebene duplizieren</div>
<div class="t" style="left:202px;top:418.6px;font-size:11.7px;color:#2e3436">Aktuelle Ebene löschen</div>
<svg class="a" style="left:1070px;top:774px" width="18" height="17"><defs><linearGradient id="cm1" x1="0" y1="0" x2="0" y2="1"><stop offset="0" stop-color="#b8f8b8"/><stop offset=".6" stop-color="#b8f0f8"/><stop offset="1" stop-color="#c8b8f8"/></linearGradient><linearGradient id="cm2" x1="0" y1="0" x2="1" y2="0"><stop offset="0" stop-color="#fff" stop-opacity="0"/><stop offset="1" stop-color="#f8b8d8"/></linearGradient></defs><path d="M3 1.8 L16 11 L6 16 Z" fill="url(#cm1)"/><path d="M3 1.8 L16 11 L6 16 Z" fill="url(#cm2)" opacity=".8"/></svg>
</body></html>
